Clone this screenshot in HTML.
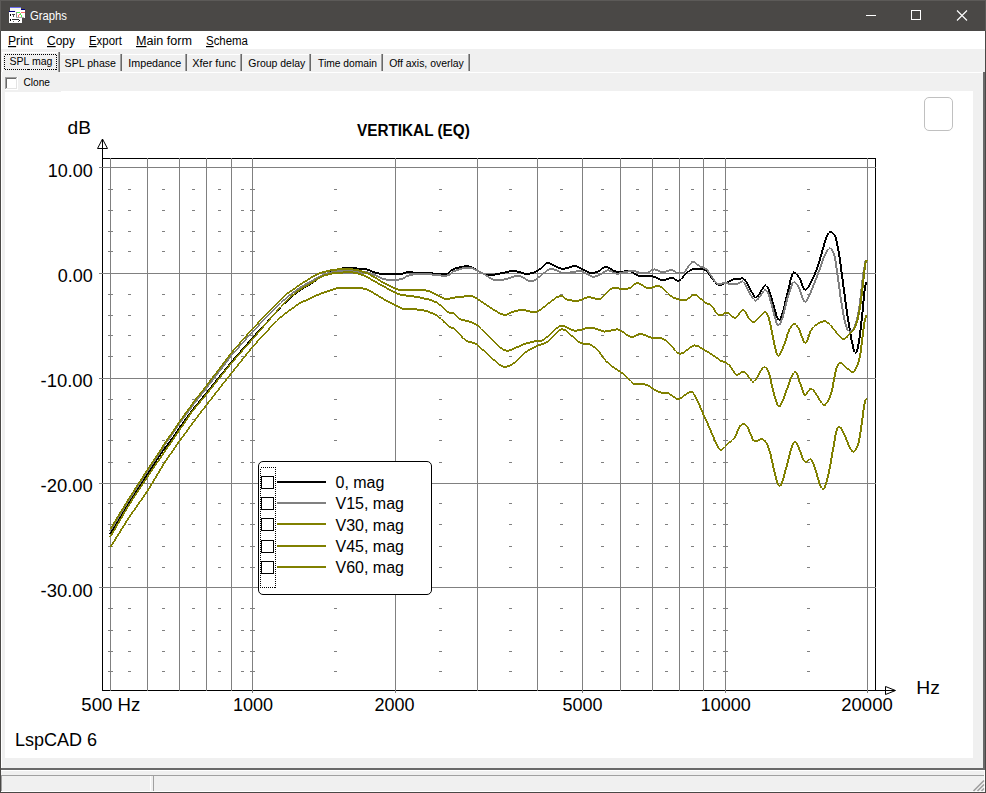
<!DOCTYPE html>
<html lang="en"><head><meta charset="utf-8"><title>Graphs</title>
<style>
html,body{margin:0;padding:0;background:#f0f0f0;}
body{width:986px;height:793px;overflow:hidden;position:relative;font-family:"Liberation Sans",sans-serif;}
svg{position:absolute;left:0;top:0;display:block;}
text{font-family:"Liberation Sans",sans-serif;fill:#000;}
.ui{font-size:12px;}
.tab{font-size:11.5px;}
.ax{font-size:18px;}
.lg{font-size:16px;}
.g{stroke:#808080;stroke-width:1;shape-rendering:crispEdges;}
.k{stroke:#000;stroke-width:1;shape-rendering:crispEdges;fill:none;}
</style></head><body>
<svg width="986" height="793" viewBox="0 0 986 793">
<rect x="0" y="0" width="986" height="793" fill="#f0f0f0"/>
<rect x="0" y="0" width="986" height="31" fill="#4a4846"/>
<rect x="0" y="0" width="986" height="1" fill="#5c5a58"/><rect x="0" y="0" width="1" height="31" fill="#5c5a58"/><rect x="985" y="0" width="1" height="31" fill="#5c5a58"/>
<rect x="1" y="31" width="984" height="18" fill="#ffffff"/>
<rect x="0" y="31" width="1" height="762" fill="#4a4846"/>
<rect x="985" y="31" width="1" height="762" fill="#4a4846"/>
<rect x="0" y="792" width="986" height="1" fill="#4a4846"/>
<g shape-rendering="crispEdges">
<rect x="10" y="7" width="11" height="5" fill="#f4f4ee"/><rect x="10" y="7" width="11" height="1" fill="#6c6cf0"/>
<rect x="16" y="10" width="9" height="8" fill="#ffffff"/><rect x="21" y="9" width="4" height="1" fill="#000080"/>
<rect x="16" y="12" width="4" height="1" fill="#50f050"/><rect x="20" y="13" width="1" height="1" fill="#90c060"/><rect x="20" y="14" width="1" height="1" fill="#50f050"/><rect x="21" y="15" width="1" height="2" fill="#50f050"/>
<rect x="21" y="12" width="4" height="1" fill="#ff7070"/><rect x="19" y="14" width="1" height="1" fill="#ff7070"/><rect x="18" y="15" width="1" height="2" fill="#ff7070"/>
<rect x="9" y="12" width="7" height="11" fill="#ffffff"/><rect x="9" y="18" width="13" height="5" fill="#ffffff"/><rect x="9" y="11" width="6" height="1" fill="#000080"/>
<rect x="16" y="12" width="1" height="6" fill="#8a8a88"/><rect x="16" y="17" width="8" height="1" fill="#b0b0ae"/>
<rect x="10" y="14" width="1" height="2" fill="#000"/><rect x="12" y="14" width="3" height="1" fill="#444"/><rect x="13" y="15" width="1" height="2" fill="#555"/>
<rect x="10" y="19" width="1" height="2" fill="#000"/><rect x="12" y="19" width="7" height="1" fill="#333"/><rect x="19" y="20" width="1" height="1" fill="#000"/><rect x="18" y="21" width="1" height="1" fill="#444"/><rect x="13" y="21" width="1" height="1" fill="#666"/>
</g>
<text class="ui" x="30" y="19.5" style="fill:#fff" textLength="37" lengthAdjust="spacingAndGlyphs">Graphs</text>
<g stroke="#fff" stroke-width="1" fill="none">
<line x1="866" y1="15.5" x2="876" y2="15.5" shape-rendering="crispEdges"/>
<rect x="911.5" y="10.5" width="9" height="9" shape-rendering="crispEdges"/>
<path d="M957,10.5 L967,20.5 M967,10.5 L957,20.5" stroke-width="1.1"/>
</g>
<text class="ui" x="8" y="45" textLength="25" lengthAdjust="spacingAndGlyphs"><tspan text-decoration="underline">P</tspan>rint</text>
<text class="ui" x="47" y="45" textLength="28" lengthAdjust="spacingAndGlyphs"><tspan text-decoration="underline">C</tspan>opy</text>
<text class="ui" x="89" y="45" textLength="33" lengthAdjust="spacingAndGlyphs"><tspan text-decoration="underline">E</tspan>xport</text>
<text class="ui" x="136" y="45" textLength="56" lengthAdjust="spacingAndGlyphs"><tspan text-decoration="underline">M</tspan>ain form</text>
<text class="ui" x="206" y="45" textLength="42" lengthAdjust="spacingAndGlyphs"><tspan text-decoration="underline">S</tspan>chema</text>
<g shape-rendering="crispEdges">
<rect x="1" y="72" width="982" height="1" fill="#ffffff"/>
<rect x="1" y="72" width="1" height="697" fill="#ffffff"/>
<rect x="983" y="72" width="2" height="698" fill="#696969"/>
<rect x="1" y="768" width="984" height="2" fill="#696969"/>
<rect x="2" y="52" width="58" height="21" fill="#f0f0f0"/>
<rect x="2" y="52" width="1" height="20" fill="#ffffff"/><rect x="3" y="52" width="55" height="1" fill="#ffffff"/>
<rect x="58" y="52" width="1" height="20" fill="#a0a0a0"/><rect x="59" y="52" width="1" height="20" fill="#696969"/>
<rect x="4.5" y="54.5" width="52" height="15" fill="none" stroke="#000" stroke-width="1" stroke-dasharray="1,1"/>
<rect x="61" y="54" width="59" height="1" fill="#ffffff"/>
<rect x="120" y="54" width="1" height="17" fill="#a0a0a0"/><rect x="121" y="54" width="1" height="17" fill="#696969"/>
<rect x="123" y="54" width="62" height="1" fill="#ffffff"/>
<rect x="185" y="54" width="1" height="17" fill="#a0a0a0"/><rect x="186" y="54" width="1" height="17" fill="#696969"/>
<rect x="188" y="54" width="52" height="1" fill="#ffffff"/>
<rect x="240" y="54" width="1" height="17" fill="#a0a0a0"/><rect x="241" y="54" width="1" height="17" fill="#696969"/>
<rect x="243" y="54" width="66" height="1" fill="#ffffff"/>
<rect x="309" y="54" width="1" height="17" fill="#a0a0a0"/><rect x="310" y="54" width="1" height="17" fill="#696969"/>
<rect x="312" y="54" width="69" height="1" fill="#ffffff"/>
<rect x="381" y="54" width="1" height="17" fill="#a0a0a0"/><rect x="382" y="54" width="1" height="17" fill="#696969"/>
<rect x="384" y="54" width="84" height="1" fill="#ffffff"/>
<rect x="468" y="54" width="1" height="17" fill="#a0a0a0"/><rect x="469" y="54" width="1" height="17" fill="#696969"/>
</g>
<text class="tab" x="9.5" y="64.8" textLength="43.0" lengthAdjust="spacingAndGlyphs">SPL mag</text>
<text class="tab" x="64.6" y="66.7" textLength="51.4" lengthAdjust="spacingAndGlyphs">SPL phase</text>
<text class="tab" x="128.3" y="66.7" textLength="53.0" lengthAdjust="spacingAndGlyphs">Impedance</text>
<text class="tab" x="192.3" y="66.7" textLength="43.7" lengthAdjust="spacingAndGlyphs">Xfer func</text>
<text class="tab" x="248.3" y="66.7" textLength="57.0" lengthAdjust="spacingAndGlyphs">Group delay</text>
<text class="tab" x="318.0" y="66.7" textLength="59.0" lengthAdjust="spacingAndGlyphs">Time domain</text>
<text class="tab" x="389.2" y="66.7" textLength="74.6" lengthAdjust="spacingAndGlyphs">Off axis, overlay</text>
<g shape-rendering="crispEdges">
<rect x="5" y="77" width="13" height="13" fill="#ffffff"/>
<rect x="5" y="77" width="12" height="1" fill="#a0a0a0"/><rect x="5" y="77" width="1" height="12" fill="#a0a0a0"/>
<rect x="6" y="78" width="10" height="1" fill="#696969"/><rect x="6" y="78" width="1" height="10" fill="#696969"/>
<rect x="6" y="88" width="11" height="1" fill="#e3e3e3"/><rect x="16" y="78" width="1" height="11" fill="#e3e3e3"/>
</g>
<text class="tab" x="23.5" y="86.4" textLength="26.5" lengthAdjust="spacingAndGlyphs">Clone</text>
<rect x="5" y="91" width="968" height="667" fill="#ffffff"/>
<rect x="5" y="91" width="56" height="1" fill="#f0f0f0"/>
<rect x="924.5" y="97.5" width="28" height="33" rx="4.5" fill="none" stroke="#c0c0c0" stroke-width="1"/>
<g class="k">
<line x1="102.5" y1="139" x2="102.5" y2="691"/>
<line x1="102" y1="158.5" x2="876" y2="158.5"/>
<line x1="875.5" y1="158" x2="875.5" y2="691"/>
<line x1="102" y1="690.5" x2="895" y2="690.5"/>
</g>
<path d="M102.5,139 L97.5,148.5 L107.5,148.5 Z" fill="none" stroke="#000" stroke-width="1"/>
<path d="M895.5,690.5 L885.5,686.5 L885.5,694.5 Z" fill="none" stroke="#000" stroke-width="1"/>
<g class="g">
<line x1="110.5" y1="158" x2="110.5" y2="691"/>
<line x1="147.5" y1="158" x2="147.5" y2="691"/>
<line x1="179.5" y1="158" x2="179.5" y2="691"/>
<line x1="206.5" y1="158" x2="206.5" y2="691"/>
<line x1="231.5" y1="158" x2="231.5" y2="691"/>
<line x1="252.5" y1="158" x2="252.5" y2="693"/>
<line x1="395.5" y1="158" x2="395.5" y2="693"/>
<line x1="477.5" y1="158" x2="477.5" y2="691"/>
<line x1="537.5" y1="158" x2="537.5" y2="691"/>
<line x1="582.5" y1="158" x2="582.5" y2="693"/>
<line x1="620.5" y1="158" x2="620.5" y2="691"/>
<line x1="652.5" y1="158" x2="652.5" y2="691"/>
<line x1="679.5" y1="158" x2="679.5" y2="691"/>
<line x1="703.5" y1="158" x2="703.5" y2="691"/>
<line x1="725.5" y1="158" x2="725.5" y2="693"/>
<line x1="867.5" y1="158" x2="867.5" y2="693"/>
<line x1="99" y1="167.5" x2="876" y2="167.5"/>
<line x1="99" y1="273.5" x2="876" y2="273.5"/>
<line x1="99" y1="378.5" x2="876" y2="378.5"/>
<line x1="99" y1="483.5" x2="876" y2="483.5"/>
<line x1="99" y1="587.5" x2="876" y2="587.5"/>
<path d="M128,189.5h3M128,210.5h3M128,231.5h3M128,251.5h3M128,294.5h3M128,315.5h3M128,335.5h3M128,356.5h3M128,399.5h3M128,419.5h3M128,440.5h3M128,462.5h3M128,503.5h3M128,524.5h3M128,546.5h3M128,567.5h3M128,608.5h3M128,630.5h3M128,651.5h3M128,671.5h3M162,189.5h3M162,210.5h3M162,231.5h3M162,251.5h3M162,294.5h3M162,315.5h3M162,335.5h3M162,356.5h3M162,399.5h3M162,419.5h3M162,440.5h3M162,462.5h3M162,503.5h3M162,524.5h3M162,546.5h3M162,567.5h3M162,608.5h3M162,630.5h3M162,651.5h3M162,671.5h3M192,189.5h3M192,210.5h3M192,231.5h3M192,251.5h3M192,294.5h3M192,315.5h3M192,335.5h3M192,356.5h3M192,399.5h3M192,419.5h3M192,440.5h3M192,462.5h3M192,503.5h3M192,524.5h3M192,546.5h3M192,567.5h3M192,608.5h3M192,630.5h3M192,651.5h3M192,671.5h3M218,189.5h3M218,210.5h3M218,231.5h3M218,251.5h3M218,294.5h3M218,315.5h3M218,335.5h3M218,356.5h3M218,399.5h3M218,419.5h3M218,440.5h3M218,462.5h3M218,503.5h3M218,524.5h3M218,546.5h3M218,567.5h3M218,608.5h3M218,630.5h3M218,651.5h3M218,671.5h3M241,189.5h3M241,210.5h3M241,231.5h3M241,251.5h3M241,294.5h3M241,315.5h3M241,335.5h3M241,356.5h3M241,399.5h3M241,419.5h3M241,440.5h3M241,462.5h3M241,503.5h3M241,524.5h3M241,546.5h3M241,567.5h3M241,608.5h3M241,630.5h3M241,651.5h3M241,671.5h3M334,189.5h3M334,210.5h3M334,231.5h3M334,251.5h3M334,294.5h3M334,315.5h3M334,335.5h3M334,356.5h3M334,399.5h3M334,419.5h3M334,440.5h3M334,462.5h3M334,503.5h3M334,524.5h3M334,546.5h3M334,567.5h3M334,608.5h3M334,630.5h3M334,651.5h3M334,671.5h3M439,189.5h3M439,210.5h3M439,231.5h3M439,251.5h3M439,294.5h3M439,315.5h3M439,335.5h3M439,356.5h3M439,399.5h3M439,419.5h3M439,440.5h3M439,462.5h3M439,503.5h3M439,524.5h3M439,546.5h3M439,567.5h3M439,608.5h3M439,630.5h3M439,651.5h3M439,671.5h3M509,189.5h3M509,210.5h3M509,231.5h3M509,251.5h3M509,294.5h3M509,315.5h3M509,335.5h3M509,356.5h3M509,399.5h3M509,419.5h3M509,440.5h3M509,462.5h3M509,503.5h3M509,524.5h3M509,546.5h3M509,567.5h3M509,608.5h3M509,630.5h3M509,651.5h3M509,671.5h3M560,189.5h3M560,210.5h3M560,231.5h3M560,251.5h3M560,294.5h3M560,315.5h3M560,335.5h3M560,356.5h3M560,399.5h3M560,419.5h3M560,440.5h3M560,462.5h3M560,503.5h3M560,524.5h3M560,546.5h3M560,567.5h3M560,608.5h3M560,630.5h3M560,651.5h3M560,671.5h3M601,189.5h3M601,210.5h3M601,231.5h3M601,251.5h3M601,294.5h3M601,315.5h3M601,335.5h3M601,356.5h3M601,399.5h3M601,419.5h3M601,440.5h3M601,462.5h3M601,503.5h3M601,524.5h3M601,546.5h3M601,567.5h3M601,608.5h3M601,630.5h3M601,651.5h3M601,671.5h3M636,189.5h3M636,210.5h3M636,231.5h3M636,251.5h3M636,294.5h3M636,315.5h3M636,335.5h3M636,356.5h3M636,399.5h3M636,419.5h3M636,440.5h3M636,462.5h3M636,503.5h3M636,524.5h3M636,546.5h3M636,567.5h3M636,608.5h3M636,630.5h3M636,651.5h3M636,671.5h3M665,189.5h3M665,210.5h3M665,231.5h3M665,251.5h3M665,294.5h3M665,315.5h3M665,335.5h3M665,356.5h3M665,399.5h3M665,419.5h3M665,440.5h3M665,462.5h3M665,503.5h3M665,524.5h3M665,546.5h3M665,567.5h3M665,608.5h3M665,630.5h3M665,651.5h3M665,671.5h3M691,189.5h3M691,210.5h3M691,231.5h3M691,251.5h3M691,294.5h3M691,315.5h3M691,335.5h3M691,356.5h3M691,399.5h3M691,419.5h3M691,440.5h3M691,462.5h3M691,503.5h3M691,524.5h3M691,546.5h3M691,567.5h3M691,608.5h3M691,630.5h3M691,651.5h3M691,671.5h3M713,189.5h3M713,210.5h3M713,231.5h3M713,251.5h3M713,294.5h3M713,315.5h3M713,335.5h3M713,356.5h3M713,399.5h3M713,419.5h3M713,440.5h3M713,462.5h3M713,503.5h3M713,524.5h3M713,546.5h3M713,567.5h3M713,608.5h3M713,630.5h3M713,651.5h3M713,671.5h3M807,189.5h3M807,210.5h3M807,231.5h3M807,251.5h3M807,294.5h3M807,315.5h3M807,335.5h3M807,356.5h3M807,399.5h3M807,419.5h3M807,440.5h3M807,462.5h3M807,503.5h3M807,524.5h3M807,546.5h3M807,567.5h3M807,608.5h3M807,630.5h3M807,651.5h3M807,671.5h3M108,189.5h5M108,210.5h5M108,231.5h5M108,251.5h5M108,294.5h5M108,315.5h5M108,335.5h5M108,356.5h5M108,399.5h5M108,419.5h5M108,440.5h5M108,462.5h5M108,503.5h5M108,524.5h5M108,546.5h5M108,567.5h5M108,608.5h5M108,630.5h5M108,651.5h5M108,671.5h5M250,189.5h5M250,210.5h5M250,231.5h5M250,251.5h5M250,294.5h5M250,315.5h5M250,335.5h5M250,356.5h5M250,399.5h5M250,419.5h5M250,440.5h5M250,462.5h5M250,503.5h5M250,524.5h5M250,546.5h5M250,567.5h5M250,608.5h5M250,630.5h5M250,651.5h5M250,671.5h5M723,189.5h5M723,210.5h5M723,231.5h5M723,251.5h5M723,294.5h5M723,315.5h5M723,335.5h5M723,356.5h5M723,399.5h5M723,419.5h5M723,440.5h5M723,462.5h5M723,503.5h5M723,524.5h5M723,546.5h5M723,567.5h5M723,608.5h5M723,630.5h5M723,651.5h5M723,671.5h5" fill="none"/>
</g>
<path d="M109.3,533.8L127.7,503.2L129.7,503.2L111.3,533.8ZM127.7,503.2L146.7,474.0L148.7,474.0L129.7,503.2ZM146.7,474.0L161.9,450.7L163.9,450.7L148.7,474.0ZM161.9,450.7L170.1,440.0L172.1,440.0L163.9,450.7ZM170.1,440.0L178.1,428.4L180.1,428.4L172.1,440.0ZM178.1,428.4L191.1,410.3L193.1,410.3L180.1,428.4ZM191.1,410.3L205.2,393.2L207.2,393.2L193.1,410.3ZM205.2,393.2L230.5,361.9L232.5,361.9L207.2,393.2ZM230.5,361.9L251.6,337.7L253.6,337.7L232.5,361.9ZM251.6,337.7L279.9,307.0L281.9,307.0L253.6,337.7ZM280.9,306.0L287.7,299.4L287.7,301.4L280.9,308.0ZM287.7,299.4L293.3,294.4L293.3,296.4L287.7,301.4ZM293.3,294.4L298.3,290.4L298.3,292.4L293.3,296.4ZM298.3,290.4L302.7,287.4L302.7,289.4L298.3,292.4ZM302.7,287.4L306.6,285.3L306.6,287.3L302.7,289.4ZM306.6,285.3L310.4,283.1L310.4,285.1L306.6,287.3ZM310.4,283.1L314.5,280.3L314.5,282.3L310.4,285.1ZM314.5,280.3L318.5,277.4L318.5,279.4L314.5,282.3ZM318.5,277.4L322.6,274.8L322.6,276.8L318.5,279.4ZM322.6,274.8L326.8,272.8L326.8,274.8L322.6,276.8ZM326.8,272.8L331.1,271.1L331.1,273.1L326.8,274.8ZM331.1,271.1L334.8,269.7L334.8,271.7L331.1,273.1ZM334.8,269.7L337.3,268.7L337.3,270.7L334.8,271.7ZM337.3,268.7L339.3,268.0L339.3,270.0L337.3,270.7ZM339.3,268.0L342.1,267.5L342.1,269.5L339.3,270.0ZM342.1,267.5L346.6,267.3L346.6,269.3L342.1,269.5ZM346.6,267.3L351.8,267.3L351.8,269.3L346.6,269.3ZM351.8,267.3L356.7,267.5L356.7,269.5L351.8,269.3ZM356.7,267.5L360.7,267.8L360.7,269.8L356.7,269.5ZM360.7,267.8L364.4,268.1L364.4,270.1L360.7,269.8ZM364.4,268.1L367.6,268.7L367.6,270.7L364.4,270.1ZM367.6,268.7L370.3,269.6L370.3,271.6L367.6,270.7ZM370.3,269.6L372.5,270.6L372.5,272.6L370.3,271.6ZM372.5,270.6L374.9,271.5L374.9,273.5L372.5,272.6ZM374.9,271.5L377.3,272.2L377.3,274.2L374.9,273.5ZM377.3,272.2L379.8,272.7L379.8,274.7L377.3,274.2ZM379.8,272.7L383.4,273.0L383.4,275.0L379.8,274.7ZM383.4,273.0L389.0,273.1L389.0,275.1L383.4,275.0ZM389.0,273.1L395.6,273.0L395.6,275.0L389.0,275.1ZM395.6,273.0L401.1,272.8L401.1,274.8L395.6,275.0ZM401.1,272.8L404.5,272.2L404.5,274.2L401.1,274.8ZM404.5,272.2L406.8,271.4L406.8,273.4L404.5,274.2ZM406.8,271.4L409.2,271.0L409.2,273.0L406.8,273.4ZM409.2,271.0L411.8,271.3L411.8,273.3L409.2,273.0ZM411.8,271.3L414.3,271.8L414.3,273.8L411.8,273.3ZM414.3,271.8L417.4,272.3L417.4,274.3L414.3,273.8ZM417.4,272.3L421.2,272.4L421.2,274.4L417.4,274.3ZM421.2,272.4L425.6,272.3L425.6,274.3L421.2,274.4ZM425.6,272.3L430.3,272.3L430.3,274.3L425.6,274.3ZM430.3,272.3L435.9,272.8L435.9,274.8L430.3,274.3ZM435.9,272.8L441.9,273.4L441.9,275.4L435.9,274.8ZM441.9,273.4L446.6,273.4L446.6,275.4L441.9,275.4ZM446.6,273.4L448.9,272.3L448.9,274.3L446.6,275.4ZM447.9,273.3L449.0,271.5L451.0,271.5L449.9,273.3ZM449.0,271.5L450.4,270.0L452.4,270.0L451.0,271.5ZM451.4,269.0L453.9,267.9L453.9,269.9L451.4,271.0ZM453.9,267.9L456.7,267.0L456.7,269.0L453.9,269.9ZM456.7,267.0L459.6,266.3L459.6,268.3L456.7,269.0ZM459.6,266.3L462.4,265.7L462.4,267.7L459.6,268.3ZM462.4,265.7L465.1,265.3L465.1,267.3L462.4,267.7ZM465.1,265.3L467.7,265.3L467.7,267.3L465.1,267.3ZM467.7,265.3L470.1,265.8L470.1,267.8L467.7,267.3ZM470.1,265.8L472.3,266.6L472.3,268.6L470.1,267.8ZM472.3,266.6L474.2,267.4L474.2,269.4L472.3,268.6ZM474.2,267.4L475.3,268.0L475.3,270.0L474.2,269.4ZM475.3,268.0L476.0,268.6L476.0,270.6L475.3,270.0ZM476.0,268.6L477.5,269.5L477.5,271.5L476.0,270.6ZM477.5,269.5L480.3,271.2L480.3,273.2L477.5,271.5ZM480.3,271.2L484.0,273.2L484.0,275.2L480.3,273.2ZM484.0,273.2L487.9,274.4L487.9,276.4L484.0,275.2ZM487.9,274.4L492.1,274.2L492.1,276.2L487.9,276.4ZM492.1,274.2L496.5,273.3L496.5,275.3L492.1,276.2ZM496.5,273.3L501.0,272.3L501.0,274.3L496.5,275.3ZM501.0,272.3L505.4,271.4L505.4,273.4L501.0,274.3ZM505.4,271.4L509.9,270.4L509.9,272.4L505.4,273.4ZM509.9,270.4L514.1,270.0L514.1,272.0L509.9,272.4ZM514.1,270.0L518.2,270.7L518.2,272.7L514.1,272.0ZM518.2,270.7L522.1,272.0L522.1,274.0L518.2,272.7ZM522.1,272.0L525.6,272.8L525.6,274.8L522.1,274.0ZM525.6,272.8L528.6,272.8L528.6,274.8L525.6,274.8ZM528.6,272.8L531.3,272.3L531.3,274.3L528.6,274.8ZM531.3,272.3L533.8,271.6L533.8,273.6L531.3,274.3ZM533.8,271.6L536.1,270.6L536.1,272.6L533.8,273.6ZM536.1,270.6L538.2,269.4L538.2,271.4L536.1,272.6ZM538.2,269.4L540.3,267.9L540.3,269.9L538.2,271.4ZM540.3,267.9L542.5,265.7L542.5,267.7L540.3,269.9ZM541.5,266.7L543.7,264.3L545.7,264.3L543.5,266.7ZM544.7,263.3L546.9,261.8L546.9,263.8L544.7,265.3ZM546.9,261.8L549.0,261.9L549.0,263.9L546.9,263.8ZM549.0,261.9L551.1,262.9L551.1,264.9L549.0,263.9ZM551.1,262.9L553.4,264.1L553.4,266.1L551.1,264.9ZM553.4,264.1L556.1,265.4L556.1,267.4L553.4,266.1ZM556.1,265.4L558.9,266.9L558.9,268.9L556.1,267.4ZM558.9,266.9L561.6,267.9L561.6,269.9L558.9,268.9ZM561.6,267.9L563.9,267.9L563.9,269.9L561.6,269.9ZM563.9,267.9L566.0,267.3L566.0,269.3L563.9,269.9ZM566.0,267.3L568.2,266.7L568.2,268.7L566.0,269.3ZM568.2,266.7L570.6,266.0L570.6,268.0L568.2,268.7ZM570.6,266.0L573.1,265.3L573.1,267.3L570.6,268.0ZM573.1,265.3L575.6,265.1L575.6,267.1L573.1,267.3ZM575.6,265.1L578.0,265.8L578.0,267.8L575.6,267.1ZM578.0,265.8L580.3,267.1L580.3,269.1L578.0,267.8ZM580.3,267.1L582.6,268.3L582.6,270.3L580.3,269.1ZM582.6,268.3L584.9,269.5L584.9,271.5L582.6,270.3ZM584.9,269.5L587.2,270.7L587.2,272.7L584.9,271.5ZM587.2,270.7L589.5,271.5L589.5,273.5L587.2,272.7ZM589.5,271.5L592.0,271.8L592.0,273.8L589.5,273.5ZM592.0,271.8L594.5,271.7L594.5,273.7L592.0,273.8ZM594.5,271.7L596.9,271.1L596.9,273.1L594.5,273.7ZM596.9,271.1L599.2,269.8L599.2,271.8L596.9,273.1ZM599.2,269.8L601.3,268.0L601.3,270.0L599.2,271.8ZM601.3,268.0L603.4,266.7L603.4,268.7L601.3,270.0ZM603.4,266.7L605.4,266.3L605.4,268.3L603.4,268.7ZM605.4,266.3L607.3,266.3L607.3,268.3L605.4,268.3ZM607.3,266.3L609.2,266.8L609.2,268.8L607.3,268.3ZM609.2,266.8L611.0,267.8L611.0,269.8L609.2,268.8ZM611.0,267.8L612.7,269.2L612.7,271.2L611.0,269.8ZM612.7,269.2L614.8,270.3L614.8,272.3L612.7,271.2ZM614.8,270.3L617.4,270.7L617.4,272.7L614.8,272.3ZM617.4,270.7L620.3,270.7L620.3,272.7L617.4,272.7ZM620.3,270.7L623.0,270.6L623.0,272.6L620.3,272.7ZM623.0,270.6L625.2,270.3L625.2,272.3L623.0,272.6ZM625.2,270.3L627.2,269.8L627.2,271.8L625.2,272.3ZM627.2,269.8L629.5,270.0L629.5,272.0L627.2,271.8ZM629.5,270.0L632.4,271.4L632.4,273.4L629.5,272.0ZM632.4,271.4L635.7,273.4L635.7,275.4L632.4,273.4ZM635.7,273.4L639.3,274.9L639.3,276.9L635.7,275.4ZM639.3,274.9L643.6,275.2L643.6,277.2L639.3,276.9ZM643.6,275.2L648.3,275.0L648.3,277.0L643.6,277.2ZM648.3,275.0L652.5,275.2L652.5,277.2L648.3,277.0ZM652.5,275.2L655.7,276.3L655.7,278.3L652.5,277.2ZM655.7,276.3L658.4,277.7L658.4,279.7L655.7,278.3ZM658.4,277.7L660.7,278.8L660.7,280.8L658.4,279.7ZM660.7,278.8L662.5,279.1L662.5,281.1L660.7,280.8ZM662.5,279.1L664.0,279.1L664.0,281.1L662.5,281.1ZM664.0,279.1L665.6,278.8L665.6,280.8L664.0,281.1ZM665.6,278.8L667.6,278.1L667.6,280.1L665.6,280.8ZM667.6,278.1L669.9,277.2L669.9,279.2L667.6,280.1ZM669.9,277.2L672.1,276.9L672.1,278.9L669.9,279.2ZM672.1,276.9L674.3,277.8L674.3,279.8L672.1,278.9ZM674.3,277.8L676.5,279.3L676.5,281.3L674.3,279.8ZM676.5,279.3L678.7,279.8L678.7,281.8L676.5,281.3ZM678.7,279.8L680.9,278.4L680.9,280.4L678.7,281.8ZM679.9,279.4L682.1,276.9L684.1,276.9L681.9,279.4ZM682.1,276.9L684.2,274.6L686.2,274.6L684.1,276.9ZM684.2,274.6L685.9,272.7L687.9,272.7L686.2,274.6ZM685.9,272.7L687.6,271.0L689.6,271.0L687.9,272.7ZM688.6,270.0L691.0,268.7L691.0,270.7L688.6,272.0ZM691.0,268.7L694.9,268.1L694.9,270.1L691.0,270.7ZM694.9,268.1L699.5,268.0L699.5,270.0L694.9,270.1ZM699.5,268.0L703.3,268.3L703.3,270.3L699.5,270.0ZM703.3,268.3L705.4,269.0L705.4,271.0L703.3,270.3ZM705.4,269.0L706.7,270.2L706.7,272.2L705.4,271.0ZM707.7,271.2L709.2,273.0L707.2,273.0L705.7,271.2ZM709.2,273.0L711.3,275.8L709.3,275.8L707.2,273.0ZM711.3,275.8L713.7,279.3L711.7,279.3L709.3,275.8ZM713.7,279.3L715.8,282.0L713.8,282.0L711.7,279.3ZM714.8,281.0L716.5,282.6L716.5,284.6L714.8,283.0ZM716.5,282.6L718.0,283.5L718.0,285.5L716.5,284.6ZM718.0,283.5L719.7,283.8L719.7,285.8L718.0,285.5ZM719.7,283.8L721.7,283.5L721.7,285.5L719.7,285.8ZM721.7,283.5L724.0,282.7L724.0,284.7L721.7,285.5ZM724.0,282.7L726.2,281.8L726.2,283.8L724.0,284.7ZM726.2,281.8L728.4,280.7L728.4,282.7L726.2,283.8ZM728.4,280.7L730.6,279.5L730.6,281.5L728.4,282.7ZM730.6,279.5L732.8,278.5L732.8,280.5L730.6,281.5ZM732.8,278.5L735.3,278.0L735.3,280.0L732.8,280.5ZM735.3,278.0L737.8,277.7L737.8,279.7L735.3,280.0ZM737.8,277.7L740.0,277.6L740.0,279.6L737.8,279.7ZM740.0,277.6L741.6,277.4L741.6,279.4L740.0,279.6ZM741.6,277.4L743.0,277.3L743.0,279.3L741.6,279.4ZM743.0,277.3L744.4,278.1L744.4,280.1L743.0,279.3ZM745.4,279.1L747.1,281.4L745.1,281.4L743.4,279.1ZM747.1,281.4L748.9,284.7L746.9,284.7L745.1,281.4ZM748.9,284.7L750.7,288.0L748.7,288.0L746.9,284.7ZM750.7,288.0L752.6,291.7L750.6,291.7L748.7,288.0ZM752.6,291.7L754.6,295.5L752.6,295.5L750.6,291.7ZM754.6,295.5L756.5,297.7L754.5,297.7L752.6,295.5ZM755.5,296.7L757.2,296.1L757.2,298.1L755.5,298.7ZM756.2,297.1L757.7,294.9L759.7,294.9L758.2,297.1ZM757.7,294.9L759.3,292.4L761.3,292.4L759.7,294.9ZM759.3,292.4L760.9,289.6L762.9,289.6L761.3,292.4ZM760.9,289.6L762.6,286.6L764.6,286.6L762.9,289.6ZM762.6,286.6L764.1,285.0L766.1,285.0L764.6,286.6ZM765.1,284.0L766.4,284.5L766.4,286.5L765.1,286.0ZM767.4,285.5L768.7,287.4L766.7,287.4L765.4,285.5ZM768.7,287.4L770.1,290.6L768.1,290.6L766.7,287.4ZM770.1,290.6L771.8,295.8L769.8,295.8L768.1,290.6ZM771.8,295.8L773.7,302.4L771.7,302.4L769.8,295.8ZM773.7,302.4L775.4,308.3L773.4,308.3L771.7,302.4ZM775.4,308.3L776.9,313.4L774.9,313.4L773.4,308.3ZM776.9,313.4L778.2,317.9L776.2,317.9L774.9,313.4ZM778.2,317.9L779.5,320.3L777.5,320.3L776.2,317.9ZM778.5,319.3L779.8,319.0L779.8,321.0L778.5,321.3ZM778.8,320.0L780.0,317.6L782.0,317.6L780.8,320.0ZM780.0,317.6L781.4,313.6L783.4,313.6L782.0,317.6ZM781.4,313.6L783.1,307.5L785.1,307.5L783.4,313.6ZM783.1,307.5L784.9,299.7L786.9,299.7L785.1,307.5ZM784.9,299.7L786.7,292.4L788.7,292.4L786.9,299.7ZM786.7,292.4L788.3,285.7L790.3,285.7L788.7,292.4ZM788.3,285.7L789.8,279.3L791.8,279.3L790.3,285.7ZM789.8,279.3L791.1,274.7L793.1,274.7L791.8,279.3ZM791.1,274.7L792.0,272.6L794.0,272.6L793.1,274.7ZM793.0,271.6L793.8,271.2L793.8,273.2L793.0,273.6ZM793.8,271.2L794.7,271.6L794.7,273.6L793.8,273.2ZM794.7,271.6L796.0,272.5L796.0,274.5L794.7,273.6ZM797.0,273.5L798.6,275.1L796.6,275.1L795.0,273.5ZM798.6,275.1L800.1,277.4L798.1,277.4L796.6,275.1ZM800.1,277.4L801.7,280.8L799.7,280.8L798.1,277.4ZM801.7,280.8L803.2,284.9L801.2,284.9L799.7,280.8ZM803.2,284.9L804.6,288.0L802.6,288.0L801.2,284.9ZM804.6,288.0L805.5,289.5L803.5,289.5L802.6,288.0ZM804.5,288.5L805.3,289.1L805.3,291.1L804.5,290.5ZM805.3,289.1L806.2,288.7L806.2,290.7L805.3,291.1ZM805.2,289.7L806.4,288.3L808.4,288.3L807.2,289.7ZM806.4,288.3L807.9,286.0L809.9,286.0L808.4,288.3ZM807.9,286.0L809.6,282.7L811.6,282.7L809.9,286.0ZM809.6,282.7L811.8,278.2L813.8,278.2L811.6,282.7ZM811.8,278.2L814.4,272.6L816.4,272.6L813.8,278.2ZM814.4,272.6L816.7,266.8L818.7,266.8L816.4,272.6ZM816.7,266.8L818.6,260.6L820.6,260.6L818.7,266.8ZM818.6,260.6L820.4,254.1L822.4,254.1L820.6,260.6ZM820.4,254.1L822.0,248.2L824.0,248.2L822.4,254.1ZM822.0,248.2L823.6,243.0L825.6,243.0L824.0,248.2ZM823.6,243.0L825.0,238.4L827.0,238.4L825.6,243.0ZM825.0,238.4L826.4,235.0L828.4,235.0L827.0,238.4ZM826.4,235.0L827.6,233.0L829.6,233.0L828.4,235.0ZM828.6,232.0L829.7,231.0L829.7,233.0L828.6,234.0ZM829.7,231.0L830.9,231.0L830.9,233.0L829.7,233.0ZM830.9,231.0L832.3,231.6L832.3,233.6L830.9,233.0ZM832.3,231.6L833.9,233.0L833.9,235.0L832.3,233.6ZM834.9,234.0L836.3,236.8L834.3,236.8L832.9,234.0ZM836.3,236.8L837.6,241.2L835.6,241.2L834.3,236.8ZM837.6,241.2L838.7,246.9L836.7,246.9L835.6,241.2ZM838.7,246.9L839.9,253.5L837.9,253.5L836.7,246.9ZM839.9,253.5L841.1,261.1L839.1,261.1L837.9,253.5ZM841.1,261.1L842.2,269.6L840.2,269.6L839.1,261.1ZM842.2,269.6L843.4,278.3L841.4,278.3L840.2,269.6ZM843.4,278.3L844.5,286.9L842.5,286.9L841.4,278.3ZM844.5,286.9L845.7,295.7L843.7,295.7L842.5,286.9ZM845.7,295.7L846.9,304.7L844.9,304.7L843.7,295.7ZM846.9,304.7L848.3,314.3L846.3,314.3L844.9,304.7ZM848.3,314.3L849.8,324.2L847.8,324.2L846.3,314.3ZM849.8,324.2L851.3,333.0L849.3,333.0L847.8,324.2ZM851.3,333.0L852.8,341.1L850.8,341.1L849.3,333.0ZM852.8,341.1L854.4,348.2L852.4,348.2L850.8,341.1ZM854.4,348.2L855.8,352.4L853.8,352.4L852.4,348.2ZM854.8,351.4L856.0,351.7L856.0,353.7L854.8,353.4ZM855.0,352.7L856.2,350.2L858.2,350.2L857.0,352.7ZM856.2,350.2L857.3,345.4L859.3,345.4L858.2,350.2ZM857.3,345.4L858.5,338.1L860.5,338.1L859.3,345.4ZM858.5,338.1L859.7,328.6L861.7,328.6L860.5,338.1ZM859.7,328.6L860.8,318.9L862.8,318.9L861.7,328.6ZM860.8,318.9L861.8,308.9L863.8,308.9L862.8,318.9ZM861.8,308.9L862.7,298.7L864.7,298.7L863.8,308.9ZM862.7,298.7L863.5,290.6L865.5,290.6L864.7,298.7ZM863.5,290.6L864.2,285.9L866.2,285.9L865.5,290.6ZM864.2,285.9L864.8,283.4L866.8,283.4L866.2,285.9ZM864.8,283.4L865.2,281.8L867.2,281.8L866.8,283.4Z" fill="#000000" stroke="none" shape-rendering="crispEdges"/>
<path d="M109.3,530.8L127.7,500.5L129.7,500.5L111.3,530.8ZM127.7,500.5L146.7,471.0L148.7,471.0L129.7,500.5ZM146.7,471.0L165.6,442.3L167.6,442.3L148.7,471.0ZM165.6,442.3L178.1,424.0L180.1,424.0L167.6,442.3ZM178.1,424.0L194.3,402.0L196.3,402.0L180.1,424.0ZM194.3,402.0L205.2,388.5L207.2,388.5L196.3,402.0ZM205.2,388.5L230.5,355.5L232.5,355.5L207.2,388.5ZM230.5,355.5L251.6,331.5L253.6,331.5L232.5,355.5ZM251.6,331.5L279.9,302.8L281.9,302.8L253.6,331.5ZM280.9,301.8L287.7,295.8L287.7,297.8L280.9,303.8ZM287.7,295.8L293.3,291.5L293.3,293.5L287.7,297.8ZM293.3,291.5L298.3,287.9L298.3,289.9L293.3,293.5ZM298.3,287.9L302.8,285.0L302.8,287.0L298.3,289.9ZM302.8,285.0L306.6,282.9L306.6,284.9L302.8,287.0ZM306.6,282.9L310.4,280.9L310.4,282.9L306.6,284.9ZM310.4,280.9L314.1,278.7L314.1,280.7L310.4,282.9ZM314.1,278.7L317.6,276.7L317.6,278.7L314.1,280.7ZM317.6,276.7L321.4,274.8L321.4,276.8L317.6,278.7ZM321.4,274.8L325.5,273.1L325.5,275.1L321.4,276.8ZM325.5,273.1L329.9,271.7L329.9,273.7L325.5,275.1ZM329.9,271.7L334.8,270.7L334.8,272.7L329.9,273.7ZM334.8,270.7L340.6,270.2L340.6,272.2L334.8,272.7ZM340.6,270.2L347.0,270.2L347.0,272.2L340.6,272.2ZM347.0,270.2L353.0,270.3L353.0,272.3L347.0,272.2ZM353.0,270.3L358.3,270.5L358.3,272.5L353.0,272.3ZM358.3,270.5L363.2,270.9L363.2,272.9L358.3,272.5ZM363.2,270.9L367.6,271.5L367.6,273.5L363.2,272.9ZM367.6,271.5L371.2,272.6L371.2,274.6L367.6,273.5ZM371.2,272.6L374.4,273.9L374.4,275.9L371.2,274.6ZM374.4,273.9L377.4,275.2L377.4,277.2L374.4,275.9ZM377.4,275.2L380.3,276.5L380.3,278.5L377.4,277.2ZM380.3,276.5L383.1,277.8L383.1,279.8L380.3,278.5ZM383.1,277.8L386.5,278.6L386.5,280.6L383.1,279.8ZM386.5,278.6L391.3,278.9L391.3,280.9L386.5,280.6ZM391.3,278.9L396.7,278.7L396.7,280.7L391.3,280.9ZM396.7,278.7L401.1,278.3L401.1,280.3L396.7,280.7ZM401.1,278.3L403.3,277.5L403.3,279.5L401.1,280.3ZM403.3,277.5L404.5,276.5L404.5,278.5L403.3,279.5ZM404.5,276.5L406.0,275.5L406.0,277.5L404.5,278.5ZM406.0,275.5L408.2,274.7L408.2,276.7L406.0,277.5ZM408.2,274.7L410.7,273.9L410.7,275.9L408.2,276.7ZM410.7,273.9L414.1,273.4L414.1,275.4L410.7,275.9ZM414.1,273.4L418.9,273.2L418.9,275.2L414.1,275.4ZM418.9,273.2L424.6,273.2L424.6,275.2L418.9,275.2ZM424.6,273.2L430.3,273.4L430.3,275.4L424.6,275.2ZM430.3,273.4L436.1,273.9L436.1,275.9L430.3,275.4ZM436.1,273.9L441.9,274.6L441.9,276.6L436.1,275.9ZM441.9,274.6L446.6,274.7L446.6,276.7L441.9,276.6ZM446.6,274.7L449.4,273.7L449.4,275.7L446.6,276.7ZM449.4,273.7L451.1,272.1L451.1,274.1L449.4,275.7ZM451.1,272.1L453.1,270.6L453.1,272.6L451.1,274.1ZM453.1,270.6L456.2,269.4L456.2,271.4L453.1,272.6ZM456.2,269.4L459.6,268.2L459.6,270.2L456.2,271.4ZM459.6,268.2L462.8,267.4L462.8,269.4L459.6,270.2ZM462.8,267.4L465.7,266.9L465.7,268.9L462.8,269.4ZM465.7,266.9L468.4,266.7L468.4,268.7L465.7,268.9ZM468.4,266.7L470.9,266.9L470.9,268.9L468.4,268.7ZM470.9,266.9L473.1,267.6L473.1,269.6L470.9,268.9ZM473.1,267.6L475.2,268.7L475.2,270.7L473.1,269.6ZM475.2,268.7L477.5,270.0L477.5,272.0L475.2,270.7ZM477.5,270.0L480.3,271.4L480.3,273.4L477.5,272.0ZM480.3,271.4L483.4,272.9L483.4,274.9L480.3,273.4ZM483.4,272.9L486.2,274.4L486.2,276.4L483.4,274.9ZM486.2,274.4L488.4,275.9L488.4,277.9L486.2,276.4ZM488.4,275.9L490.3,277.4L490.3,279.4L488.4,277.9ZM490.3,277.4L492.8,278.5L492.8,280.5L490.3,279.4ZM492.8,278.5L496.3,278.9L496.3,280.9L492.8,280.5ZM496.3,278.9L500.3,278.9L500.3,280.9L496.3,280.9ZM500.3,278.9L504.3,278.5L504.3,280.5L500.3,280.9ZM504.3,278.5L508.3,277.4L508.3,279.4L504.3,280.5ZM508.3,277.4L512.3,275.9L512.3,277.9L508.3,279.4ZM512.3,275.9L515.7,274.9L515.7,276.9L512.3,277.9ZM515.7,274.9L518.3,274.8L518.3,276.8L515.7,276.9ZM518.3,274.8L520.3,275.3L520.3,277.3L518.3,276.8ZM520.3,275.3L522.3,276.0L522.3,278.0L520.3,277.3ZM522.3,276.0L524.5,277.2L524.5,279.2L522.3,278.0ZM524.5,277.2L526.8,278.8L526.8,280.8L524.5,279.2ZM526.8,278.8L528.9,279.8L528.9,281.8L526.8,280.8ZM528.9,279.8L530.8,280.1L530.8,282.1L528.9,281.8ZM530.8,280.1L532.6,280.0L532.6,282.0L530.8,282.1ZM532.6,280.0L534.6,279.3L534.6,281.3L532.6,282.0ZM534.6,279.3L536.9,277.8L536.9,279.8L534.6,281.3ZM536.9,277.8L539.5,275.7L539.5,277.7L536.9,279.8ZM539.5,275.7L542.0,273.6L542.0,275.6L539.5,277.7ZM542.0,273.6L544.5,271.6L544.5,273.6L542.0,275.6ZM544.5,271.6L547.0,269.6L547.0,271.6L544.5,273.6ZM547.0,269.6L549.3,268.3L549.3,270.3L547.0,271.6ZM549.3,268.3L551.3,267.9L551.3,269.9L549.3,270.3ZM551.3,267.9L553.2,268.2L553.2,270.2L551.3,269.9ZM553.2,268.2L555.1,268.7L555.1,270.7L553.2,270.2ZM555.1,268.7L557.0,269.6L557.0,271.6L555.1,270.7ZM557.0,269.6L559.0,270.8L559.0,272.8L557.0,271.6ZM559.0,270.8L561.6,271.6L561.6,273.6L559.0,272.8ZM561.6,271.6L565.3,271.7L565.3,273.7L561.6,273.6ZM565.3,271.7L569.5,271.5L569.5,273.5L565.3,273.7ZM569.5,271.5L573.1,271.1L573.1,273.1L569.5,273.5ZM573.1,271.1L575.5,270.5L575.5,272.5L573.1,273.1ZM575.5,270.5L577.2,269.8L577.2,271.8L575.5,272.5ZM577.2,269.8L578.9,269.5L578.9,271.5L577.2,271.8ZM578.9,269.5L580.7,270.0L580.7,272.0L578.9,271.5ZM580.7,270.0L582.5,270.9L582.5,272.9L580.7,272.0ZM582.5,270.9L584.6,272.0L584.6,274.0L582.5,272.9ZM584.6,272.0L587.2,273.3L587.2,275.3L584.6,274.0ZM587.2,273.3L590.1,274.8L590.1,276.8L587.2,275.3ZM590.1,274.8L592.8,275.6L592.8,277.6L590.1,276.8ZM592.8,275.6L595.0,275.5L595.0,277.5L592.8,277.6ZM595.0,275.5L597.0,274.9L597.0,276.9L595.0,277.5ZM597.0,274.9L599.3,273.9L599.3,275.9L597.0,276.9ZM599.3,273.9L602.1,272.2L602.1,274.2L599.3,275.9ZM602.1,272.2L605.2,270.3L605.2,272.3L602.1,274.2ZM605.2,270.3L608.2,269.2L608.2,271.2L605.2,272.3ZM608.2,269.2L611.0,270.0L611.0,272.0L608.2,271.2ZM611.0,270.0L613.7,271.7L613.7,273.7L611.0,272.0ZM613.7,271.7L616.4,272.8L616.4,274.8L613.7,273.7ZM616.4,272.8L619.1,272.6L619.1,274.6L616.4,274.8ZM619.1,272.6L621.9,271.8L621.9,273.8L619.1,274.6ZM621.9,271.8L624.6,271.1L624.6,273.1L621.9,273.8ZM624.6,271.1L627.3,270.6L627.3,272.6L624.6,273.1ZM627.3,270.6L630.1,270.1L630.1,272.1L627.3,272.6ZM630.1,270.1L632.8,270.0L632.8,272.0L630.1,272.1ZM632.8,270.0L635.6,270.5L635.6,272.5L632.8,272.0ZM635.6,270.5L638.4,271.4L638.4,273.4L635.6,272.5ZM638.4,271.4L641.0,272.0L641.0,274.0L638.4,273.4ZM641.0,272.0L643.3,272.2L643.3,274.2L641.0,274.0ZM643.3,272.2L645.4,272.0L645.4,274.0L643.3,274.2ZM645.4,272.0L647.5,271.6L647.5,273.6L645.4,274.0ZM647.5,271.6L649.6,270.5L649.6,272.5L647.5,273.6ZM649.6,270.5L651.8,269.1L651.8,271.1L649.6,272.5ZM651.8,269.1L654.1,268.3L654.1,270.3L651.8,271.1ZM654.1,268.3L656.7,269.0L656.7,271.0L654.1,270.3ZM656.7,269.0L659.4,270.3L659.4,272.3L656.7,271.0ZM659.4,270.3L662.3,271.1L662.3,273.1L659.4,272.3ZM662.3,271.1L665.6,270.6L665.6,272.6L662.3,273.1ZM665.6,270.6L669.1,269.5L669.1,271.5L665.6,272.6ZM669.1,269.5L672.1,269.0L672.1,271.0L669.1,271.5ZM672.1,269.0L674.0,269.7L674.0,271.7L672.1,271.0ZM674.0,269.7L675.4,271.1L675.4,273.1L674.0,271.7ZM675.4,271.1L677.0,272.0L677.0,274.0L675.4,273.1ZM677.0,272.0L679.1,272.4L679.1,274.4L677.0,274.0ZM679.1,272.4L681.3,272.5L681.3,274.5L679.1,274.4ZM681.3,272.5L683.6,271.6L683.6,273.6L681.3,274.5ZM682.6,272.6L684.9,270.1L686.9,270.1L684.6,272.6ZM684.9,270.1L687.3,266.6L689.3,266.6L686.9,270.1ZM687.3,266.6L689.2,263.9L691.2,263.9L689.3,266.6ZM689.2,263.9L690.4,262.5L692.4,262.5L691.2,263.9ZM691.4,261.5L692.2,260.8L692.2,262.8L691.4,263.5ZM692.2,260.8L693.4,260.8L693.4,262.8L692.2,262.8ZM693.4,260.8L695.3,261.9L695.3,263.9L693.4,262.8ZM695.3,261.9L697.7,263.7L697.7,265.7L695.3,263.9ZM697.7,263.7L700.0,265.4L700.0,267.4L697.7,265.7ZM700.0,265.4L702.2,266.3L702.2,268.3L700.0,267.4ZM702.2,266.3L704.4,266.9L704.4,268.9L702.2,268.3ZM704.4,266.9L706.6,268.3L706.6,270.3L704.4,268.9ZM707.6,269.3L709.8,272.1L707.8,272.1L705.6,269.3ZM709.8,272.1L712.1,275.6L710.1,275.6L707.8,272.1ZM712.1,275.6L714.1,278.7L712.1,278.7L710.1,275.6ZM714.1,278.7L715.8,281.1L713.8,281.1L712.1,278.7ZM715.8,281.1L717.3,283.2L715.3,283.2L713.8,281.1ZM716.3,282.2L718.0,283.4L718.0,285.4L716.3,284.2ZM718.0,283.4L720.1,283.3L720.1,285.3L718.0,285.4ZM720.1,283.3L722.3,282.4L722.3,284.4L720.1,285.3ZM722.3,282.4L724.6,281.8L724.6,283.8L722.3,284.4ZM724.6,281.8L726.8,282.1L726.8,284.1L724.6,283.8ZM726.8,282.1L728.9,282.7L728.9,284.7L726.8,284.1ZM728.9,282.7L731.1,283.1L731.1,285.1L728.9,284.7ZM731.1,283.1L733.4,283.1L733.4,285.1L731.1,285.1ZM733.4,283.1L735.7,283.0L735.7,285.0L733.4,285.1ZM735.7,283.0L737.7,282.6L737.7,284.6L735.7,285.0ZM737.7,282.6L739.3,281.9L739.3,283.9L737.7,284.6ZM739.3,281.9L740.6,281.0L740.6,283.0L739.3,283.9ZM740.6,281.0L741.8,280.5L741.8,282.5L740.6,283.0ZM741.8,280.5L742.7,280.3L742.7,282.3L741.8,282.5ZM742.7,280.3L743.4,280.5L743.4,282.5L742.7,282.3ZM744.4,281.5L745.4,282.7L743.4,282.7L742.4,281.5ZM745.4,282.7L746.9,285.6L744.9,285.6L743.4,282.7ZM746.9,285.6L748.8,289.6L746.8,289.6L744.9,285.6ZM748.8,289.6L750.7,293.3L748.7,293.3L746.8,289.6ZM750.7,293.3L752.6,296.5L750.6,296.5L748.7,293.3ZM752.6,296.5L754.6,299.4L752.6,299.4L750.6,296.5ZM753.6,298.4L755.5,299.9L755.5,301.9L753.6,300.4ZM755.5,299.9L757.2,299.2L757.2,301.2L755.5,301.9ZM756.2,300.2L757.7,298.1L759.7,298.1L758.2,300.2ZM757.7,298.1L759.3,295.9L761.3,295.9L759.7,298.1ZM759.3,295.9L760.9,293.5L762.9,293.5L761.3,295.9ZM760.9,293.5L762.6,290.9L764.6,290.9L762.9,293.5ZM763.6,289.9L765.1,288.7L765.1,290.7L763.6,291.9ZM765.1,288.7L766.4,289.4L766.4,291.4L765.1,290.7ZM767.4,290.4L768.7,292.4L766.7,292.4L765.4,290.4ZM768.7,292.4L770.1,295.9L768.1,295.9L766.7,292.4ZM770.1,295.9L771.8,301.7L769.8,301.7L768.1,295.9ZM771.8,301.7L773.7,309.0L771.7,309.0L769.8,301.7ZM773.7,309.0L775.4,315.3L773.4,315.3L771.7,309.0ZM775.4,315.3L776.7,320.1L774.7,320.1L773.4,315.3ZM776.7,320.1L777.8,323.8L775.8,323.8L774.7,320.1ZM777.8,323.8L779.0,325.6L777.0,325.6L775.8,323.8ZM778.0,324.6L779.4,323.9L779.4,325.9L778.0,326.6ZM778.4,324.9L779.8,322.1L781.8,322.1L780.4,324.9ZM779.8,322.1L781.4,318.0L783.4,318.0L781.8,322.1ZM781.4,318.0L783.1,311.9L785.1,311.9L783.4,318.0ZM783.1,311.9L785.0,304.4L787.0,304.4L785.1,311.9ZM785.0,304.4L786.7,297.7L788.7,297.7L787.0,304.4ZM786.7,297.7L788.3,292.4L790.3,292.4L788.7,297.7ZM788.3,292.4L789.8,287.8L791.8,287.8L790.3,292.4ZM789.8,287.8L791.1,284.4L793.1,284.4L791.8,287.8ZM791.1,284.4L792.0,282.4L794.0,282.4L793.1,284.4ZM792.0,282.4L792.8,281.6L794.8,281.6L794.0,282.4ZM793.8,280.6L794.7,280.8L794.7,282.8L793.8,282.6ZM794.7,280.8L796.0,282.0L796.0,284.0L794.7,282.8ZM797.0,283.0L798.6,285.2L796.6,285.2L795.0,283.0ZM798.6,285.2L800.1,288.0L798.1,288.0L796.6,285.2ZM800.1,288.0L801.7,292.1L799.7,292.1L798.1,288.0ZM801.7,292.1L803.2,296.8L801.2,296.8L799.7,292.1ZM803.2,296.8L804.6,300.3L802.6,300.3L801.2,296.8ZM804.6,300.3L805.5,301.9L803.5,301.9L802.6,300.3ZM804.5,300.9L805.3,301.4L805.3,303.4L804.5,302.9ZM805.3,301.4L806.2,300.6L806.2,302.6L805.3,303.4ZM805.2,301.6L806.4,299.6L808.4,299.6L807.2,301.6ZM806.4,299.6L807.9,296.5L809.9,296.5L808.4,299.6ZM807.9,296.5L809.6,292.4L811.6,292.4L809.9,296.5ZM809.6,292.4L811.8,287.0L813.8,287.0L811.6,292.4ZM811.8,287.0L814.4,280.7L816.4,280.7L813.8,287.0ZM814.4,280.7L816.7,274.7L818.7,274.7L816.4,280.7ZM816.7,274.7L818.6,269.3L820.6,269.3L818.7,274.7ZM818.6,269.3L820.4,264.2L822.4,264.2L820.6,269.3ZM820.4,264.2L822.0,259.7L824.0,259.7L822.4,264.2ZM822.0,259.7L823.6,255.9L825.6,255.9L824.0,259.7ZM823.6,255.9L825.1,252.8L827.1,252.8L825.6,255.9ZM825.1,252.8L826.4,250.4L828.4,250.4L827.1,252.8ZM826.4,250.4L827.5,248.8L829.5,248.8L828.4,250.4ZM828.5,247.8L829.4,246.9L829.4,248.9L828.5,249.8ZM829.4,246.9L830.4,247.2L830.4,249.2L829.4,248.9ZM831.4,248.2L832.7,249.6L830.7,249.6L829.4,248.2ZM832.7,249.6L834.1,252.1L832.1,252.1L830.7,249.6ZM834.1,252.1L835.5,256.2L833.5,256.2L832.1,252.1ZM835.5,256.2L836.7,262.4L834.7,262.4L833.5,256.2ZM836.7,262.4L837.9,270.2L835.9,270.2L834.7,262.4ZM837.9,270.2L839.0,278.3L837.0,278.3L835.9,270.2ZM839.0,278.3L840.2,286.5L838.2,286.5L837.0,278.3ZM840.2,286.5L841.3,295.1L839.3,295.1L838.2,286.5ZM841.3,295.1L842.5,303.0L840.5,303.0L839.3,295.1ZM842.5,303.0L843.7,310.3L841.7,310.3L840.5,303.0ZM843.7,310.3L844.8,316.9L842.8,316.9L841.7,310.3ZM844.8,316.9L846.0,322.4L844.0,322.4L842.8,316.9ZM846.0,322.4L847.2,326.5L845.2,326.5L844.0,322.4ZM847.2,326.5L848.4,329.4L846.4,329.4L845.2,326.5ZM848.4,329.4L849.6,331.2L847.6,331.2L846.4,329.4ZM848.6,330.2L849.8,330.8L849.8,332.8L848.6,332.2ZM849.8,330.8L850.9,330.3L850.9,332.3L849.8,332.8ZM850.9,330.3L852.1,329.3L852.1,331.3L850.9,332.3ZM851.1,330.3L852.3,329.0L854.3,329.0L853.1,330.3ZM852.3,329.0L853.4,327.2L855.4,327.2L854.3,329.0ZM853.4,327.2L854.6,324.2L856.6,324.2L855.4,327.2ZM854.6,324.2L855.8,320.1L857.8,320.1L856.6,324.2ZM855.8,320.1L857.0,315.0L859.0,315.0L857.8,320.1ZM857.0,315.0L858.2,308.3L860.2,308.3L859.0,315.0ZM858.2,308.3L859.4,298.9L861.4,298.9L860.2,308.3ZM859.4,298.9L860.6,287.8L862.6,287.8L861.4,298.9ZM860.6,287.8L861.7,278.3L863.7,278.3L862.6,287.8ZM861.7,278.3L862.7,271.1L864.7,271.1L863.7,278.3ZM862.7,271.1L863.7,265.5L865.7,265.5L864.7,271.1ZM863.7,265.5L864.4,261.5L866.4,261.5L865.7,265.5ZM864.4,261.5L864.9,259.9L866.9,259.9L866.4,261.5ZM865.9,258.9L866.2,259.0L866.2,261.0L865.9,260.9ZM867.2,260.0L867.4,260.3L865.4,260.3L865.2,260.0Z" fill="#808080" stroke="none" shape-rendering="crispEdges"/>
<path d="M109.3,529.3L127.7,499.0L129.7,499.0L111.3,529.3ZM127.7,499.0L146.7,469.5L148.7,469.5L129.7,499.0ZM146.7,469.5L165.6,440.8L167.6,440.8L148.7,469.5ZM165.6,440.8L178.1,422.3L180.1,422.3L167.6,440.8ZM178.1,422.3L194.3,400.0L196.3,400.0L180.1,422.3ZM194.3,400.0L205.2,386.1L207.2,386.1L196.3,400.0ZM205.2,386.1L230.5,352.8L232.5,352.8L207.2,386.1ZM230.5,352.8L251.6,328.6L253.6,328.6L232.5,352.8ZM251.6,328.6L279.9,299.3L281.9,299.3L253.6,328.6ZM280.9,298.3L285.9,293.7L285.9,295.7L280.9,300.3ZM285.9,293.7L289.0,291.4L289.0,293.4L285.9,295.7ZM289.0,291.4L292.2,289.2L292.2,291.2L289.0,293.4ZM292.2,289.2L296.1,286.4L296.1,288.4L292.2,291.2ZM296.1,286.4L300.1,283.6L300.1,285.6L296.1,288.4ZM300.1,283.6L304.3,280.9L304.3,282.9L300.1,285.6ZM304.3,280.9L308.9,278.0L308.9,280.0L304.3,282.9ZM308.9,278.0L313.8,275.1L313.8,277.1L308.9,280.0ZM313.8,275.1L318.9,272.7L318.9,274.7L313.8,277.1ZM318.9,272.7L324.0,270.9L324.0,272.9L318.9,274.7ZM324.0,270.9L329.3,269.6L329.3,271.6L324.0,272.9ZM329.3,269.6L334.8,268.7L334.8,270.7L329.3,271.6ZM334.8,268.7L340.9,268.2L340.9,270.2L334.8,270.7ZM340.9,268.2L347.3,268.2L347.3,270.2L340.9,270.2ZM347.3,268.2L353.0,268.5L353.0,270.5L347.3,270.2ZM353.0,268.5L357.6,269.2L357.6,271.2L353.0,270.5ZM357.6,269.2L361.5,270.2L361.5,272.2L357.6,271.2ZM361.5,270.2L365.2,271.5L365.2,273.5L361.5,272.2ZM365.2,271.5L368.7,273.0L368.7,275.0L365.2,273.5ZM368.7,273.0L371.8,274.7L371.8,276.7L368.7,275.0ZM371.8,274.7L374.9,276.4L374.9,278.4L371.8,276.7ZM374.9,276.4L377.6,278.1L377.6,280.1L374.9,278.4ZM377.6,278.1L380.2,280.0L380.2,282.0L377.6,280.1ZM380.2,280.0L383.4,281.9L383.4,283.9L380.2,282.0ZM383.4,281.9L387.9,284.2L387.9,286.2L383.4,283.9ZM387.9,284.2L393.1,286.7L393.1,288.7L387.9,286.2ZM393.1,286.7L397.9,288.5L397.9,290.5L393.1,288.7ZM397.9,288.5L401.8,289.2L401.8,291.2L397.9,290.5ZM401.8,289.2L405.3,289.3L405.3,291.3L401.8,291.2ZM405.3,289.3L409.2,289.3L409.2,291.3L405.3,291.3ZM409.2,289.3L414.0,289.2L414.0,291.2L409.2,291.3ZM414.0,289.2L419.2,288.9L419.2,290.9L414.0,291.2ZM419.2,288.9L423.9,289.0L423.9,291.0L419.2,290.9ZM423.9,289.0L427.4,289.7L427.4,291.7L423.9,291.0ZM427.4,289.7L430.4,290.8L430.4,292.8L427.4,291.7ZM430.4,290.8L433.6,292.2L433.6,294.2L430.4,292.8ZM433.6,292.2L437.2,294.1L437.2,296.1L433.6,294.2ZM437.2,294.1L441.0,296.3L441.0,298.3L437.2,296.1ZM441.0,296.3L445.0,297.7L445.0,299.7L441.0,298.3ZM445.0,297.7L449.2,297.7L449.2,299.7L445.0,299.7ZM449.2,297.7L453.5,296.8L453.5,298.8L449.2,299.7ZM453.5,296.8L457.9,296.1L457.9,298.1L453.5,298.8ZM457.9,296.1L462.7,295.6L462.7,297.6L457.9,298.1ZM462.7,295.6L467.5,295.2L467.5,297.2L462.7,297.6ZM467.5,295.2L471.5,295.2L471.5,297.2L467.5,297.2ZM471.5,295.2L473.8,295.6L473.8,297.6L471.5,297.2ZM473.8,295.6L475.3,296.5L475.3,298.5L473.8,297.6ZM475.3,296.5L477.5,297.9L477.5,299.9L475.3,298.5ZM477.5,297.9L481.0,300.2L481.0,302.2L477.5,299.9ZM481.0,300.2L485.1,303.1L485.1,305.1L481.0,302.2ZM485.1,303.1L489.5,306.0L489.5,308.0L485.1,305.1ZM489.5,306.0L494.2,309.0L494.2,311.0L489.5,308.0ZM494.2,309.0L499.1,312.0L499.1,314.0L494.2,311.0ZM499.1,312.0L503.4,313.8L503.4,315.8L499.1,314.0ZM503.4,313.8L506.8,313.6L506.8,315.6L503.4,315.8ZM506.8,313.6L509.6,312.3L509.6,314.3L506.8,315.6ZM509.6,312.3L512.5,311.0L512.5,313.0L509.6,314.3ZM512.5,311.0L515.7,310.1L515.7,312.1L512.5,313.0ZM515.7,310.1L519.0,309.2L519.0,311.2L515.7,312.1ZM519.0,309.2L522.3,308.8L522.3,310.8L519.0,311.2ZM522.3,308.8L525.7,309.3L525.7,311.3L522.3,310.8ZM525.7,309.3L529.1,310.3L529.1,312.3L525.7,311.3ZM529.1,310.3L532.1,311.0L532.1,313.0L529.1,312.3ZM532.1,311.0L534.4,311.2L534.4,313.2L532.1,313.0ZM534.4,311.2L536.4,310.9L536.4,312.9L534.4,313.2ZM536.4,310.9L538.7,310.0L538.7,312.0L536.4,312.9ZM538.7,310.0L541.7,307.9L541.7,309.9L538.7,312.0ZM541.7,307.9L545.0,305.1L545.0,307.1L541.7,309.9ZM545.0,305.1L548.5,302.3L548.5,304.3L545.0,307.1ZM548.5,302.3L552.4,299.4L552.4,301.4L548.5,304.3ZM552.4,299.4L556.5,296.5L556.5,298.5L552.4,301.4ZM556.5,296.5L560.0,294.9L560.0,296.9L556.5,298.5ZM560.0,294.9L562.4,295.4L562.4,297.4L560.0,296.9ZM562.4,295.4L564.2,297.1L564.2,299.1L562.4,297.4ZM564.2,297.1L566.6,298.5L566.6,300.5L564.2,299.1ZM566.6,298.5L570.1,299.3L570.1,301.3L566.6,300.5ZM570.1,299.3L574.1,299.8L574.1,301.8L570.1,301.3ZM574.1,299.8L578.0,299.8L578.0,301.8L574.1,301.8ZM578.0,299.8L581.5,298.8L581.5,300.8L578.0,301.8ZM581.5,298.8L584.8,297.2L584.8,299.2L581.5,300.8ZM584.8,297.2L587.9,296.2L587.9,298.2L584.8,299.2ZM587.9,296.2L590.9,296.4L590.9,298.4L587.9,298.2ZM590.9,296.4L593.7,297.3L593.7,299.3L590.9,298.4ZM593.7,297.3L596.1,297.9L596.1,299.9L593.7,299.3ZM596.1,297.9L597.7,298.2L597.7,300.2L596.1,299.9ZM597.7,298.2L598.8,298.2L598.8,300.2L597.7,300.2ZM598.8,298.2L600.0,297.9L600.0,299.9L598.8,300.2ZM600.0,297.9L601.5,297.0L601.5,299.0L600.0,299.9ZM601.5,297.0L603.1,295.7L603.1,297.7L601.5,299.0ZM603.1,295.7L604.9,294.1L604.9,296.1L603.1,297.7ZM603.9,295.1L605.7,292.8L607.7,292.8L605.9,295.1ZM605.7,292.8L607.8,290.3L609.8,290.3L607.7,292.8ZM608.8,289.3L611.5,287.5L611.5,289.5L608.8,291.3ZM611.5,287.5L615.6,287.2L615.6,289.2L611.5,289.5ZM615.6,287.2L620.5,287.7L620.5,289.7L615.6,289.2ZM620.5,287.7L624.6,288.0L624.6,290.0L620.5,289.7ZM624.6,288.0L627.3,287.7L627.3,289.7L624.6,290.0ZM627.3,287.7L629.2,287.2L629.2,289.2L627.3,289.7ZM629.2,287.2L631.1,286.4L631.1,288.4L629.2,289.2ZM631.1,286.4L633.2,284.7L633.2,286.7L631.1,288.4ZM633.2,284.7L635.3,282.7L635.3,284.7L633.2,286.7ZM635.3,282.7L637.7,281.8L637.7,283.8L635.3,284.7ZM637.7,281.8L640.7,283.1L640.7,285.1L637.7,283.8ZM640.7,283.1L644.1,285.4L644.1,287.4L640.7,285.1ZM644.1,285.4L647.5,287.0L647.5,289.0L644.1,287.4ZM647.5,287.0L651.0,286.8L651.0,288.8L647.5,289.0ZM651.0,286.8L654.5,285.7L654.5,287.7L651.0,288.8ZM654.5,285.7L657.4,285.1L657.4,287.1L654.5,287.7ZM657.4,285.1L659.3,285.2L659.3,287.2L657.4,287.1ZM659.3,285.2L660.6,285.8L660.6,287.8L659.3,287.2ZM660.6,285.8L662.3,287.0L662.3,289.0L660.6,287.8ZM662.3,287.0L664.7,289.3L664.7,291.3L662.3,289.0ZM665.7,290.3L668.5,293.3L666.5,293.3L663.7,290.3ZM667.5,292.3L670.5,294.9L670.5,296.9L667.5,294.3ZM670.5,294.9L673.8,296.7L673.8,298.7L670.5,296.9ZM673.8,296.7L677.2,298.1L677.2,300.1L673.8,298.7ZM677.2,298.1L680.3,299.0L680.3,301.0L677.2,300.1ZM680.3,299.0L682.7,299.3L682.7,301.3L680.3,301.0ZM682.7,299.3L684.8,299.2L684.8,301.2L682.7,301.3ZM684.8,299.2L686.9,298.5L686.9,300.5L684.8,301.2ZM686.9,298.5L689.1,296.9L689.1,298.9L686.9,300.5ZM689.1,296.9L691.3,294.9L691.3,296.9L689.1,298.9ZM691.3,294.9L693.4,293.6L693.4,295.6L691.3,296.9ZM693.4,293.6L695.1,293.6L695.1,295.6L693.4,295.6ZM695.1,293.6L696.7,294.5L696.7,296.5L695.1,295.6ZM696.7,294.5L698.4,295.7L698.4,297.7L696.7,296.5ZM698.4,295.7L700.5,297.5L700.5,299.5L698.4,297.7ZM700.5,297.5L702.7,299.6L702.7,301.6L700.5,299.5ZM702.7,299.6L704.9,301.5L704.9,303.5L702.7,301.6ZM704.9,301.5L707.1,302.5L707.1,304.5L704.9,303.5ZM707.1,302.5L709.2,303.2L709.2,305.2L707.1,304.5ZM709.2,303.2L711.5,304.7L711.5,306.7L709.2,305.2ZM712.5,305.7L714.9,309.0L712.9,309.0L710.5,305.7ZM714.9,309.0L717.4,313.0L715.4,313.0L712.9,309.0ZM717.4,313.0L719.9,315.6L717.9,315.6L715.4,313.0ZM718.9,314.6L721.5,314.2L721.5,316.2L718.9,316.6ZM721.5,314.2L724.3,312.5L724.3,314.5L721.5,316.2ZM724.3,312.5L727.0,311.6L727.0,313.6L724.3,314.5ZM727.0,311.6L729.9,313.2L729.9,315.2L727.0,313.6ZM729.9,313.2L732.7,315.7L732.7,317.7L729.9,315.2ZM732.7,315.7L735.2,317.0L735.2,319.0L732.7,317.7ZM735.2,317.0L737.1,315.9L737.1,317.9L735.2,319.0ZM736.1,316.9L737.6,314.5L739.6,314.5L738.1,316.9ZM737.6,314.5L739.0,312.5L741.0,312.5L739.6,314.5ZM739.0,312.5L740.2,311.0L742.2,311.0L741.0,312.5ZM740.2,311.0L741.3,309.7L743.3,309.7L742.2,311.0ZM742.3,308.7L743.6,308.7L743.6,310.7L742.3,310.7ZM744.6,309.7L746.2,311.8L744.2,311.8L742.6,309.7ZM746.2,311.8L748.0,315.1L746.0,315.1L744.2,311.8ZM748.0,315.1L749.8,318.0L747.8,318.0L746.0,315.1ZM749.8,318.0L751.4,320.0L749.4,320.0L747.8,318.0ZM750.4,319.0L752.0,320.5L752.0,322.5L750.4,321.0ZM752.0,320.5L753.7,321.0L753.7,323.0L752.0,322.5ZM753.7,321.0L755.6,320.0L755.6,322.0L753.7,323.0ZM755.6,320.0L757.6,318.1L757.6,320.1L755.6,322.0ZM757.6,318.1L759.6,316.1L759.6,318.1L757.6,320.1ZM758.6,317.1L760.5,315.0L762.5,315.0L760.6,317.1ZM760.5,315.0L762.4,313.0L764.4,313.0L762.5,315.0ZM763.4,312.0L765.1,311.2L765.1,313.2L763.4,314.0ZM765.1,311.2L766.5,312.0L766.5,314.0L765.1,313.2ZM767.5,313.0L768.8,315.2L766.8,315.2L765.5,313.0ZM768.8,315.2L770.1,318.9L768.1,318.9L766.8,315.2ZM770.1,318.9L771.5,325.1L769.5,325.1L768.1,318.9ZM771.5,325.1L773.0,332.9L771.0,332.9L769.5,325.1ZM773.0,332.9L774.5,340.1L772.5,340.1L771.0,332.9ZM774.5,340.1L776.0,346.7L774.0,346.7L772.5,340.1ZM776.0,346.7L777.4,352.7L775.4,352.7L774.0,346.7ZM777.4,352.7L779.0,355.9L777.0,355.9L775.4,352.7ZM778.0,354.9L779.7,354.1L779.7,356.1L778.0,356.9ZM778.7,355.1L780.4,351.6L782.4,351.6L780.7,355.1ZM780.4,351.6L782.3,347.1L784.3,347.1L782.4,351.6ZM782.3,347.1L784.3,341.4L786.3,341.4L784.3,347.1ZM784.3,341.4L786.4,334.8L788.4,334.8L786.3,341.4ZM786.4,334.8L788.4,329.5L790.4,329.5L788.4,334.8ZM788.4,329.5L790.3,326.3L792.3,326.3L790.4,329.5ZM790.3,326.3L792.0,324.4L794.0,324.4L792.3,326.3ZM793.0,323.4L794.7,322.8L794.7,324.8L793.0,325.4ZM794.7,322.8L796.2,323.6L796.2,325.6L794.7,324.8ZM797.2,324.6L798.7,326.8L796.7,326.8L795.2,324.6ZM798.7,326.8L800.1,329.5L798.1,329.5L796.7,326.8ZM800.1,329.5L801.7,333.2L799.7,333.2L798.1,329.5ZM801.7,333.2L803.2,337.6L801.2,337.6L799.7,333.2ZM803.2,337.6L804.6,340.9L802.6,340.9L801.2,337.6ZM804.6,340.9L805.5,342.7L803.5,342.7L802.6,340.9ZM805.5,342.7L806.3,343.4L804.3,343.4L803.5,342.7ZM805.3,342.4L806.2,341.7L806.2,343.7L805.3,344.4ZM805.2,342.7L806.5,339.7L808.5,339.7L807.2,342.7ZM806.5,339.7L808.0,335.1L810.0,335.1L808.5,339.7ZM808.0,335.1L809.6,331.2L811.6,331.2L810.0,335.1ZM809.6,331.2L811.2,328.6L813.2,328.6L811.6,331.2ZM811.2,328.6L813.0,326.7L815.0,326.7L813.2,328.6ZM814.0,325.7L815.9,324.0L815.9,326.0L814.0,327.7ZM815.9,324.0L818.3,322.5L818.3,324.5L815.9,326.0ZM818.3,322.5L820.8,321.3L820.8,323.3L818.3,324.5ZM820.8,321.3L823.0,320.5L823.0,322.5L820.8,323.3ZM823.0,320.5L824.4,320.2L824.4,322.2L823.0,322.5ZM824.4,320.2L825.3,320.4L825.3,322.4L824.4,322.2ZM825.3,320.4L826.5,321.0L826.5,323.0L825.3,322.4ZM826.5,321.0L828.1,322.1L828.1,324.1L826.5,323.0ZM828.1,322.1L829.8,323.7L829.8,325.7L828.1,324.1ZM830.8,324.7L832.8,326.8L830.8,326.8L828.8,324.7ZM832.8,326.8L835.1,329.6L833.1,329.6L830.8,326.8ZM835.1,329.6L837.6,332.9L835.6,332.9L833.1,329.6ZM837.6,332.9L839.9,335.6L837.9,335.6L835.6,332.9ZM839.9,335.6L841.8,337.5L839.8,337.5L837.9,335.6ZM840.8,336.5L842.5,337.9L842.5,339.9L840.8,338.5ZM842.5,337.9L844.2,338.2L844.2,340.2L842.5,339.9ZM844.2,338.2L845.9,337.2L845.9,339.2L844.2,340.2ZM844.9,338.2L846.7,336.2L848.7,336.2L846.9,338.2ZM846.7,336.2L848.5,333.9L850.5,333.9L848.7,336.2ZM848.5,333.9L850.5,331.9L852.5,331.9L850.5,333.9ZM850.5,331.9L852.7,329.5L854.7,329.5L852.5,331.9ZM852.7,329.5L854.6,325.9L856.6,325.9L854.7,329.5ZM854.6,325.9L856.3,320.6L858.3,320.6L856.6,325.9ZM856.3,320.6L857.7,314.0L859.7,314.0L858.3,320.6ZM857.7,314.0L859.1,306.5L861.1,306.5L859.7,314.0ZM859.1,306.5L860.4,297.3L862.4,297.3L861.1,306.5ZM860.4,297.3L861.6,287.2L863.6,287.2L862.4,297.3ZM861.6,287.2L862.6,278.3L864.6,278.3L863.6,287.2ZM862.6,278.3L863.4,271.3L865.4,271.3L864.6,278.3ZM863.4,271.3L864.1,265.5L866.1,265.5L865.4,271.3ZM864.1,265.5L864.7,261.5L866.7,261.5L866.1,265.5ZM864.7,261.5L865.2,260.1L867.2,260.1L866.7,261.5ZM867.2,260.1L867.6,260.5L865.6,260.5L865.2,260.1ZM867.6,260.5L867.8,260.9L865.8,260.9L865.6,260.5Z" fill="#808000" stroke="none" shape-rendering="crispEdges"/>
<path d="M109.3,536.8L127.7,505.3L129.7,505.3L111.3,536.8ZM127.7,505.3L146.7,476.3L148.7,476.3L129.7,505.3ZM146.7,476.3L171.6,440.0L173.6,440.0L148.7,476.3ZM171.6,440.0L191.1,411.5L193.1,411.5L173.6,440.0ZM191.1,411.5L205.2,394.5L207.2,394.5L193.1,411.5ZM205.2,394.5L230.5,363.0L232.5,363.0L207.2,394.5ZM230.5,363.0L251.6,339.0L253.6,339.0L232.5,363.0ZM251.6,339.0L279.9,306.5L281.9,306.5L253.6,339.0ZM280.9,305.5L287.7,298.7L287.7,300.7L280.9,307.5ZM287.7,298.7L293.3,293.8L293.3,295.8L287.7,300.7ZM293.3,293.8L298.3,289.8L298.3,291.8L293.3,295.8ZM298.3,289.8L302.7,286.7L302.7,288.7L298.3,291.8ZM302.7,286.7L306.6,284.6L306.6,286.6L302.7,288.7ZM306.6,284.6L310.4,282.5L310.4,284.5L306.6,286.6ZM310.4,282.5L314.5,279.9L314.5,281.9L310.4,284.5ZM314.5,279.9L318.5,277.3L318.5,279.3L314.5,281.9ZM318.5,277.3L322.6,275.2L322.6,277.2L318.5,279.3ZM322.6,275.2L326.4,273.8L326.4,275.8L322.6,277.2ZM326.4,273.8L330.3,272.8L330.3,274.8L326.4,275.8ZM330.3,272.8L334.8,272.1L334.8,274.1L330.3,274.8ZM334.8,272.1L340.6,271.6L340.6,273.6L334.8,274.1ZM340.6,271.6L347.2,271.3L347.2,273.3L340.6,273.6ZM347.2,271.3L353.0,271.5L353.0,273.5L347.2,273.3ZM353.0,271.5L357.5,272.3L357.5,274.3L353.0,273.5ZM357.5,272.3L361.4,273.6L361.4,275.6L357.5,274.3ZM361.4,273.6L365.2,275.2L365.2,277.2L361.4,275.6ZM365.2,275.2L369.3,277.2L369.3,279.2L365.2,277.2ZM369.3,277.2L373.3,279.6L373.3,281.6L369.3,279.2ZM373.3,279.6L377.4,281.9L377.4,283.9L373.3,281.6ZM377.4,281.9L381.5,284.2L381.5,286.2L377.4,283.9ZM381.5,284.2L385.6,286.5L385.6,288.5L381.5,286.2ZM385.6,286.5L389.5,288.6L389.5,290.6L385.6,288.5ZM389.5,288.6L393.1,290.5L393.1,292.5L389.5,290.6ZM393.1,290.5L396.5,292.3L396.5,294.3L393.1,292.5ZM396.5,292.3L400.0,293.6L400.0,295.6L396.5,294.3ZM400.0,293.6L403.5,294.3L403.5,296.3L400.0,295.6ZM403.5,294.3L407.1,294.6L407.1,296.6L403.5,296.3ZM407.1,294.6L410.9,295.0L410.9,297.0L407.1,296.6ZM410.9,295.0L415.1,295.7L415.1,297.7L410.9,297.0ZM415.1,295.7L419.5,296.4L419.5,298.4L415.1,297.7ZM419.5,296.4L423.9,297.4L423.9,299.4L419.5,298.4ZM423.9,297.4L428.3,298.4L428.3,300.4L423.9,299.4ZM428.3,298.4L432.6,299.7L432.6,301.7L428.3,300.4ZM432.6,299.7L436.8,301.5L436.8,303.5L432.6,301.7ZM436.8,301.5L440.9,304.6L440.9,306.6L436.8,303.5ZM440.9,304.6L444.8,308.4L444.8,310.4L440.9,306.6ZM444.8,308.4L448.2,311.2L448.2,313.2L444.8,310.4ZM448.2,311.2L450.8,312.2L450.8,314.2L448.2,313.2ZM450.8,312.2L452.8,312.3L452.8,314.3L450.8,314.2ZM452.8,312.3L454.7,312.8L454.7,314.8L452.8,314.3ZM454.7,312.8L456.4,314.4L456.4,316.4L454.7,314.8ZM457.4,315.4L459.1,317.5L457.1,317.5L455.4,315.4ZM458.1,316.5L460.0,318.2L460.0,320.2L458.1,318.5ZM460.0,318.2L462.5,319.1L462.5,321.1L460.0,320.2ZM462.5,319.1L465.3,319.6L465.3,321.6L462.5,321.1ZM465.3,319.6L468.2,320.3L468.2,322.3L465.3,321.6ZM468.2,320.3L471.1,321.2L471.1,323.2L468.2,322.3ZM471.1,321.2L474.2,322.4L474.2,324.4L471.1,323.2ZM474.2,322.4L477.5,324.4L477.5,326.4L474.2,324.4ZM477.5,324.4L481.2,327.6L481.2,329.6L477.5,326.4ZM482.2,328.6L486.2,332.7L484.2,332.7L480.2,328.6ZM485.2,331.7L489.5,335.9L489.5,337.9L485.2,333.7ZM489.5,335.9L494.4,340.8L494.4,342.8L489.5,337.9ZM494.4,340.8L499.6,345.9L499.6,347.9L494.4,342.8ZM499.6,345.9L504.3,349.3L504.3,351.3L499.6,347.9ZM504.3,349.3L507.9,349.9L507.9,351.9L504.3,351.3ZM507.9,349.9L511.0,348.8L511.0,350.8L507.9,351.9ZM511.0,348.8L514.1,347.4L514.1,349.4L511.0,350.8ZM514.1,347.4L517.4,346.1L517.4,348.1L514.1,349.4ZM517.4,346.1L520.6,344.7L520.6,346.7L517.4,348.1ZM520.6,344.7L523.9,343.3L523.9,345.3L520.6,346.7ZM523.9,343.3L527.3,342.2L527.3,344.2L523.9,345.3ZM527.3,342.2L530.6,341.3L530.6,343.3L527.3,344.2ZM530.6,341.3L533.8,340.5L533.8,342.5L530.6,343.3ZM533.8,340.5L536.6,340.3L536.6,342.3L533.8,342.5ZM536.6,340.3L539.2,340.3L539.2,342.3L536.6,342.3ZM539.2,340.3L542.0,339.5L542.0,341.5L539.2,342.3ZM542.0,339.5L545.3,337.4L545.3,339.4L542.0,341.5ZM545.3,337.4L548.7,334.5L548.7,336.5L545.3,339.4ZM548.7,334.5L551.8,331.8L551.8,333.8L548.7,336.5ZM551.8,331.8L554.3,329.6L554.3,331.6L551.8,333.8ZM554.3,329.6L556.4,327.5L556.4,329.5L554.3,331.6ZM556.4,327.5L558.4,326.0L558.4,328.0L556.4,329.5ZM558.4,326.0L559.9,325.0L559.9,327.0L558.4,328.0ZM559.9,325.0L561.2,324.5L561.2,326.5L559.9,327.0ZM561.2,324.5L563.3,324.7L563.3,326.7L561.2,326.5ZM563.3,324.7L566.6,326.2L566.6,328.2L563.3,326.7ZM566.6,326.2L570.6,328.5L570.6,330.5L566.6,328.2ZM570.6,328.5L574.8,329.8L574.8,331.8L570.6,330.5ZM574.8,329.8L579.2,329.3L579.2,331.3L574.8,331.8ZM579.2,329.3L583.8,327.9L583.8,329.9L579.2,331.3ZM583.8,327.9L587.9,326.9L587.9,328.9L583.8,329.9ZM587.9,326.9L591.0,326.8L591.0,328.8L587.9,328.9ZM591.0,326.8L593.5,327.1L593.5,329.1L591.0,328.8ZM593.5,327.1L596.1,327.7L596.1,329.7L593.5,329.1ZM596.1,327.7L598.8,328.7L598.8,330.7L596.1,329.7ZM598.8,328.7L601.5,329.9L601.5,331.9L598.8,330.7ZM601.5,329.9L604.3,330.6L604.3,332.6L601.5,331.9ZM604.3,330.6L607.3,330.3L607.3,332.3L604.3,332.6ZM607.3,330.3L610.3,329.6L610.3,331.6L607.3,332.3ZM610.3,329.6L613.1,329.0L613.1,331.0L610.3,331.6ZM613.1,329.0L615.3,328.6L615.3,330.6L613.1,331.0ZM615.3,328.6L617.2,328.4L617.2,330.4L615.3,330.6ZM617.2,328.4L619.7,329.0L619.7,331.0L617.2,330.4ZM619.7,329.0L623.2,331.2L623.2,333.2L619.7,331.0ZM623.2,331.2L627.2,334.1L627.2,336.1L623.2,333.2ZM627.2,334.1L631.1,335.9L631.1,337.9L627.2,336.1ZM631.1,335.9L634.5,335.4L634.5,337.4L631.1,337.9ZM634.5,335.4L637.6,333.7L637.6,335.7L634.5,337.4ZM637.6,333.7L641.0,332.9L641.0,334.9L637.6,335.7ZM641.0,332.9L644.8,333.9L644.8,335.9L641.0,334.9ZM644.8,333.9L648.7,335.8L648.7,337.8L644.8,335.9ZM648.7,335.8L652.5,337.2L652.5,339.2L648.7,337.8ZM652.5,337.2L656.0,337.4L656.0,339.4L652.5,339.2ZM656.0,337.4L659.2,337.1L659.2,339.1L656.0,339.4ZM659.2,337.1L662.3,337.5L662.3,339.5L659.2,339.1ZM662.3,337.5L665.2,339.2L665.2,341.2L662.3,339.5ZM665.2,339.2L667.9,341.6L667.9,343.6L665.2,341.2ZM667.9,341.6L670.5,344.1L670.5,346.1L667.9,343.6ZM671.5,345.1L674.1,347.9L672.1,347.9L669.5,345.1ZM674.1,347.9L676.6,350.9L674.6,350.9L672.1,347.9ZM675.6,349.9L677.9,352.0L677.9,354.0L675.6,351.9ZM677.9,352.0L679.7,352.7L679.7,354.7L677.9,354.0ZM679.7,352.7L681.4,352.5L681.4,354.5L679.7,354.7ZM681.4,352.5L683.6,351.5L683.6,353.5L681.4,354.5ZM683.6,351.5L686.8,349.2L686.8,351.2L683.6,353.5ZM686.8,349.2L690.6,346.1L690.6,348.1L686.8,351.2ZM690.6,346.1L694.3,344.4L694.3,346.4L690.6,348.1ZM694.3,344.4L697.9,345.1L697.9,347.1L694.3,346.4ZM697.9,345.1L701.4,347.1L701.4,349.1L697.9,347.1ZM701.4,347.1L704.9,349.3L704.9,351.3L701.4,349.1ZM704.9,349.3L708.4,351.4L708.4,353.4L704.9,351.3ZM708.4,351.4L711.8,353.6L711.8,355.6L708.4,353.4ZM711.8,353.6L714.8,355.6L714.8,357.6L711.8,355.6ZM714.8,355.6L717.3,357.3L717.3,359.3L714.8,357.6ZM717.3,357.3L719.4,358.9L719.4,360.9L717.3,359.3ZM719.4,358.9L721.3,360.1L721.3,362.1L719.4,360.9ZM721.3,360.1L723.1,360.7L723.1,362.7L721.3,362.1ZM723.1,360.7L724.6,360.9L724.6,362.9L723.1,362.7ZM724.6,360.9L726.2,361.5L726.2,363.5L724.6,362.9ZM726.2,361.5L727.8,362.8L727.8,364.8L726.2,363.5ZM728.8,363.8L730.5,365.5L728.5,365.5L726.8,363.8ZM730.5,365.5L732.1,367.4L730.1,367.4L728.5,365.5ZM732.1,367.4L733.8,370.0L731.8,370.0L730.1,367.4ZM733.8,370.0L735.5,372.9L733.5,372.9L731.8,370.0ZM735.5,372.9L737.1,374.8L735.1,374.8L733.5,372.9ZM736.1,373.8L737.5,374.0L737.5,376.0L736.1,375.8ZM737.5,374.0L738.7,373.1L738.7,375.1L737.5,376.0ZM738.7,373.1L740.0,372.3L740.0,374.3L738.7,375.1ZM740.0,372.3L741.3,371.6L741.3,373.6L740.0,374.3ZM741.3,371.6L742.6,370.9L742.6,372.9L741.3,373.6ZM742.6,370.9L744.0,370.9L744.0,372.9L742.6,372.9ZM744.0,370.9L745.7,372.2L745.7,374.2L744.0,372.9ZM746.7,373.2L748.4,375.3L746.4,375.3L744.7,373.2ZM748.4,375.3L750.1,377.3L748.1,377.3L746.4,375.3ZM750.1,377.3L751.5,379.3L749.5,379.3L748.1,377.3ZM751.5,379.3L752.8,381.2L750.8,381.2L749.5,379.3ZM751.8,380.2L753.1,381.0L753.1,383.0L751.8,382.2ZM753.1,381.0L754.4,380.2L754.4,382.2L753.1,383.0ZM753.4,381.2L754.8,379.4L756.8,379.4L755.4,381.2ZM754.8,379.4L756.1,377.3L758.1,377.3L756.8,379.4ZM756.1,377.3L757.5,375.0L759.5,375.0L758.1,377.3ZM757.5,375.0L758.8,372.5L760.8,372.5L759.5,375.0ZM758.8,372.5L760.2,370.3L762.2,370.3L760.8,372.5ZM760.2,370.3L761.5,368.4L763.5,368.4L762.2,370.3ZM761.5,368.4L762.9,366.9L764.9,366.9L763.5,368.4ZM763.9,365.9L765.2,365.6L765.2,367.6L763.9,367.9ZM766.2,366.6L767.6,368.0L765.6,368.0L764.2,366.6ZM767.6,368.0L768.9,370.6L766.9,370.6L765.6,368.0ZM768.9,370.6L770.3,374.3L768.3,374.3L766.9,370.6ZM770.3,374.3L771.6,379.4L769.6,379.4L768.3,374.3ZM771.6,379.4L772.9,385.5L770.9,385.5L769.6,379.4ZM772.9,385.5L774.3,391.4L772.3,391.4L770.9,385.5ZM774.3,391.4L775.9,397.2L773.9,397.2L772.3,391.4ZM775.9,397.2L777.7,402.8L775.7,402.8L773.9,397.2ZM777.7,402.8L779.3,406.2L777.3,406.2L775.7,402.8ZM778.3,405.2L779.7,405.5L779.7,407.5L778.3,407.2ZM778.7,406.5L779.9,404.6L781.9,404.6L780.7,406.5ZM779.9,404.6L781.4,401.5L783.4,401.5L781.9,404.6ZM781.4,401.5L783.3,396.8L785.3,396.8L783.4,401.5ZM783.3,396.8L785.4,390.8L787.4,390.8L785.3,396.8ZM785.4,390.8L787.4,385.4L789.4,385.4L787.4,390.8ZM787.4,385.4L789.0,380.8L791.0,380.8L789.4,385.4ZM789.0,380.8L790.5,376.8L792.5,376.8L791.0,380.8ZM790.5,376.8L791.9,373.9L793.9,373.9L792.5,376.8ZM791.9,373.9L793.2,372.5L795.2,372.5L793.9,373.9ZM794.2,371.5L795.3,371.2L795.3,373.2L794.2,373.5ZM795.3,371.2L796.5,372.3L796.5,374.3L795.3,373.2ZM797.5,373.3L798.8,376.1L796.8,376.1L795.5,373.3ZM798.8,376.1L800.1,380.3L798.1,380.3L796.8,376.1ZM800.1,380.3L801.5,384.4L799.5,384.4L798.1,380.3ZM801.5,384.4L803.0,388.7L801.0,388.7L799.5,384.4ZM803.0,388.7L804.5,393.0L802.5,393.0L801.0,388.7ZM804.5,393.0L806.0,395.5L804.0,395.5L802.5,393.0ZM805.0,394.5L806.3,393.9L806.3,395.9L805.0,396.5ZM805.3,394.9L806.4,392.4L808.4,392.4L807.3,394.9ZM806.4,392.4L807.6,390.4L809.6,390.4L808.4,392.4ZM808.6,389.4L809.7,388.3L809.7,390.3L808.6,391.4ZM809.7,388.3L810.9,387.7L810.9,389.7L809.7,390.3ZM810.9,387.7L812.2,388.0L812.2,390.0L810.9,389.7ZM813.2,389.0L814.9,390.8L812.9,390.8L811.2,389.0ZM814.9,390.8L816.8,393.6L814.8,393.6L812.9,390.8ZM816.8,393.6L818.7,396.5L816.7,396.5L814.8,393.6ZM818.7,396.5L820.7,399.8L818.7,399.8L816.7,396.5ZM820.7,399.8L822.7,403.2L820.7,403.2L818.7,399.8ZM821.7,402.2L823.7,404.0L823.7,406.0L821.7,404.2ZM823.7,404.0L825.5,403.5L825.5,405.5L823.7,406.0ZM824.5,404.5L826.2,402.4L828.2,402.4L826.5,404.5ZM826.2,402.4L827.8,399.5L829.8,399.5L828.2,402.4ZM827.8,399.5L829.3,395.8L831.3,395.8L829.8,399.5ZM829.3,395.8L830.6,391.3L832.6,391.3L831.3,395.8ZM830.6,391.3L831.8,386.4L833.8,386.4L832.6,391.3ZM831.8,386.4L832.8,380.9L834.8,380.9L833.8,386.4ZM832.8,380.9L833.8,375.2L835.8,375.2L834.8,380.9ZM833.8,375.2L834.8,370.3L836.8,370.3L835.8,375.2ZM834.8,370.3L836.1,366.7L838.1,366.7L836.8,370.3ZM836.1,366.7L837.4,364.0L839.4,364.0L838.1,366.7ZM838.4,363.0L839.9,361.6L839.9,363.6L838.4,365.0ZM839.9,361.6L841.4,361.9L841.4,363.9L839.9,363.6ZM841.4,361.9L843.0,363.4L843.0,365.4L841.4,363.9ZM843.0,363.4L844.9,365.2L844.9,367.2L843.0,365.4ZM844.9,365.2L847.2,367.3L847.2,369.3L844.9,367.2ZM847.2,367.3L849.8,369.6L849.8,371.6L847.2,369.3ZM849.8,369.6L852.0,370.9L852.0,372.9L849.8,371.6ZM852.0,370.9L853.6,370.7L853.6,372.7L852.0,372.9ZM852.6,371.7L853.8,370.4L855.8,370.4L854.6,371.7ZM853.8,370.4L855.0,368.2L857.0,368.2L855.8,370.4ZM855.0,368.2L856.4,364.9L858.4,364.9L857.0,368.2ZM856.4,364.9L857.8,360.7L859.8,360.7L858.4,364.9ZM857.8,360.7L859.0,356.1L861.0,356.1L859.8,360.7ZM859.0,356.1L859.8,351.1L861.8,351.1L861.0,356.1ZM859.8,351.1L860.4,345.6L862.4,345.6L861.8,351.1ZM860.4,345.6L861.1,340.0L863.1,340.0L862.4,345.6ZM861.1,340.0L861.9,333.9L863.9,333.9L863.1,340.0ZM861.9,333.9L862.7,327.6L864.7,327.6L863.9,333.9ZM862.7,327.6L863.5,322.4L865.5,322.4L864.7,327.6ZM863.5,322.4L864.2,318.9L866.2,318.9L865.5,322.4ZM864.2,318.9L864.9,316.5L866.9,316.5L866.2,318.9ZM864.9,316.5L865.4,315.0L867.4,315.0L866.9,316.5Z" fill="#808000" stroke="none" shape-rendering="crispEdges"/>
<path d="M109.3,547.4L127.7,517.9L129.7,517.9L111.3,547.4ZM127.7,517.9L146.7,490.7L148.7,490.7L129.7,517.9ZM146.7,490.7L162.5,464.2L164.5,464.2L148.7,490.7ZM162.5,464.2L178.7,440.8L180.7,440.8L164.5,464.2ZM178.7,440.8L192.3,422.3L194.3,422.3L180.7,440.8ZM192.3,422.3L205.2,405.3L207.2,405.3L194.3,422.3ZM205.2,405.3L230.5,373.0L232.5,373.0L207.2,405.3ZM230.5,373.0L251.6,346.8L253.6,346.8L232.5,373.0ZM251.6,346.8L275.9,320.5L277.9,320.5L253.6,346.8ZM276.9,319.5L284.0,313.4L284.0,315.4L276.9,321.5ZM284.0,313.4L290.5,308.7L290.5,310.7L284.0,315.4ZM290.5,308.7L295.8,305.0L295.8,307.0L290.5,310.7ZM295.8,305.0L299.1,302.7L299.1,304.7L295.8,307.0ZM299.1,302.7L301.3,301.6L301.3,303.6L299.1,304.7ZM301.3,301.6L304.3,300.1L304.3,302.1L301.3,303.6ZM304.3,300.1L309.1,297.8L309.1,299.8L304.3,302.1ZM309.1,297.8L314.7,295.1L314.7,297.1L309.1,299.8ZM314.7,295.1L320.2,292.8L320.2,294.8L314.7,297.1ZM320.2,292.8L325.4,290.9L325.4,292.9L320.2,294.8ZM325.4,290.9L330.5,289.2L330.5,291.2L325.4,292.9ZM330.5,289.2L334.8,287.9L334.8,289.9L330.5,291.2ZM334.8,287.9L337.5,287.2L337.5,289.2L334.8,289.9ZM337.5,287.2L339.3,286.9L339.3,288.9L337.5,289.2ZM339.3,286.9L342.1,286.7L342.1,288.7L339.3,288.9ZM342.1,286.7L347.0,286.5L347.0,288.5L342.1,288.7ZM347.0,286.5L352.8,286.5L352.8,288.5L347.0,288.5ZM352.8,286.5L357.9,286.7L357.9,288.7L352.8,288.5ZM357.9,286.7L361.6,287.2L361.6,289.2L357.9,288.7ZM361.6,287.2L364.6,287.8L364.6,289.8L361.6,289.2ZM364.6,287.8L367.6,288.9L367.6,290.9L364.6,289.8ZM367.6,288.9L370.8,290.4L370.8,292.4L367.6,290.9ZM370.8,290.4L374.0,292.3L374.0,294.3L370.8,292.4ZM374.0,292.3L377.4,294.3L377.4,296.3L374.0,294.3ZM377.4,294.3L381.3,296.6L381.3,298.6L377.4,296.3ZM381.3,296.6L385.5,299.1L385.5,301.1L381.3,298.6ZM385.5,299.1L389.5,301.3L389.5,303.3L385.5,301.1ZM389.5,301.3L393.3,303.2L393.3,305.2L389.5,303.3ZM393.3,303.2L397.0,304.9L397.0,306.9L393.3,305.2ZM397.0,304.9L400.0,306.2L400.0,308.2L397.0,306.9ZM400.0,306.2L401.4,307.1L401.4,309.1L400.0,308.2ZM401.4,307.1L402.2,307.6L402.2,309.6L401.4,309.1ZM402.2,307.6L404.4,308.0L404.4,310.0L402.2,309.6ZM404.4,308.0L409.5,308.3L409.5,310.3L404.4,310.0ZM409.5,308.3L416.0,308.4L416.0,310.4L409.5,310.3ZM416.0,308.4L422.2,309.1L422.2,311.1L416.0,310.4ZM422.2,309.1L427.4,310.4L427.4,312.4L422.2,311.1ZM427.4,310.4L432.3,312.2L432.3,314.2L427.4,312.4ZM432.3,312.2L436.8,314.5L436.8,316.5L432.3,314.2ZM436.8,314.5L441.0,317.9L441.0,319.9L436.8,316.5ZM442.0,318.9L445.9,322.9L443.9,322.9L440.0,318.9ZM444.9,321.9L448.2,325.0L448.2,327.0L444.9,323.9ZM448.2,325.0L450.8,326.4L450.8,328.4L448.2,327.0ZM450.8,326.4L452.8,327.0L452.8,329.0L450.8,328.4ZM452.8,327.0L454.7,327.9L454.7,329.9L452.8,329.0ZM454.7,327.9L456.5,329.7L456.5,331.7L454.7,329.9ZM457.5,330.7L459.2,332.8L457.2,332.8L455.5,330.7ZM459.2,332.8L461.0,334.9L459.0,334.9L457.2,332.8ZM461.0,334.9L463.0,337.0L461.0,337.0L459.0,334.9ZM463.0,337.0L465.1,339.2L463.1,339.2L461.0,337.0ZM464.1,338.2L466.6,340.0L466.6,342.0L464.1,340.2ZM466.6,340.0L469.4,340.9L469.4,342.9L466.6,342.0ZM469.4,340.9L472.7,341.6L472.7,343.6L469.4,342.9ZM472.7,341.6L476.4,343.3L476.4,345.3L472.7,343.6ZM476.4,343.3L481.0,347.1L481.0,349.1L476.4,345.3ZM481.0,347.1L486.2,352.0L486.2,354.0L481.0,349.1ZM486.2,352.0L491.1,356.4L491.1,358.4L486.2,354.0ZM491.1,356.4L495.4,360.3L495.4,362.3L491.1,358.4ZM495.4,360.3L499.5,363.7L499.5,365.7L495.4,362.3ZM499.5,363.7L503.4,365.7L503.4,367.7L499.5,365.7ZM503.4,365.7L507.2,365.6L507.2,367.6L503.4,367.7ZM507.2,365.6L510.8,364.1L510.8,366.1L507.2,367.6ZM510.8,364.1L514.1,362.1L514.1,364.1L510.8,366.1ZM514.1,362.1L517.0,359.6L517.0,361.6L514.1,364.1ZM516.0,360.6L518.7,357.6L520.7,357.6L518.0,360.6ZM518.7,357.6L521.3,354.9L523.3,354.9L520.7,357.6ZM522.3,353.9L525.0,351.8L525.0,353.8L522.3,355.9ZM525.0,351.8L527.8,349.9L527.8,351.9L525.0,353.8ZM527.8,349.9L530.5,348.2L530.5,350.2L527.8,351.9ZM530.5,348.2L533.2,346.7L533.2,348.7L530.5,350.2ZM533.2,346.7L536.0,345.3L536.0,347.3L533.2,348.7ZM536.0,345.3L538.7,344.1L538.7,346.1L536.0,347.3ZM538.7,344.1L541.3,343.3L541.3,345.3L538.7,346.1ZM541.3,343.3L543.9,342.7L543.9,344.7L541.3,345.3ZM543.9,342.7L546.9,341.1L546.9,343.1L543.9,344.7ZM546.9,341.1L550.7,337.7L550.7,339.7L546.9,343.1ZM549.7,338.7L553.8,334.3L555.8,334.3L551.7,338.7ZM554.8,333.3L558.4,330.1L558.4,332.1L554.8,335.3ZM558.4,330.1L560.8,328.6L560.8,330.6L558.4,332.1ZM560.8,328.6L562.7,328.3L562.7,330.3L560.8,330.6ZM562.7,328.3L564.9,329.0L564.9,331.0L562.7,330.3ZM564.9,329.0L568.1,331.3L568.1,333.3L564.9,331.0ZM568.1,331.3L571.6,334.6L571.6,336.6L568.1,333.3ZM571.6,334.6L574.8,337.5L574.8,339.5L571.6,336.6ZM574.8,337.5L577.2,339.4L577.2,341.4L574.8,339.5ZM577.2,339.4L579.1,341.0L579.1,343.0L577.2,341.4ZM579.1,341.0L581.3,342.1L581.3,344.1L579.1,343.0ZM581.3,342.1L583.9,342.6L583.9,344.6L581.3,344.1ZM583.9,342.6L586.7,342.7L586.7,344.7L583.9,344.6ZM586.7,342.7L589.5,343.3L589.5,345.3L586.7,344.7ZM589.5,343.3L592.3,344.7L592.3,346.7L589.5,345.3ZM592.3,344.7L595.0,346.6L595.0,348.6L592.3,346.7ZM595.0,346.6L597.7,349.0L597.7,351.0L595.0,348.6ZM598.7,350.0L601.1,353.1L599.1,353.1L596.7,350.0ZM601.1,353.1L603.3,356.6L601.3,356.6L599.1,353.1ZM603.3,356.6L605.9,360.0L603.9,360.0L601.3,356.6ZM604.9,359.0L608.0,361.9L608.0,363.9L604.9,361.0ZM608.0,361.9L611.4,364.7L611.4,366.7L608.0,363.9ZM611.4,364.7L614.8,367.2L614.8,369.2L611.4,366.7ZM614.8,367.2L618.1,369.4L618.1,371.4L614.8,369.2ZM618.1,369.4L621.4,371.5L621.4,373.5L618.1,371.4ZM621.4,371.5L624.6,373.8L624.6,375.8L621.4,373.5ZM625.6,374.8L628.7,377.9L626.7,377.9L623.6,374.8ZM628.7,377.9L631.6,381.4L629.6,381.4L626.7,377.9ZM630.6,380.4L633.6,382.8L633.6,384.8L630.6,382.4ZM633.6,382.8L636.7,383.5L636.7,385.5L633.6,384.8ZM636.7,383.5L639.8,383.2L639.8,385.2L636.7,385.5ZM639.8,383.2L642.6,383.1L642.6,385.1L639.8,385.2ZM642.6,383.1L645.0,383.6L645.0,385.6L642.6,385.1ZM645.0,383.6L647.1,384.3L647.1,386.3L645.0,385.6ZM647.1,384.3L649.2,385.2L649.2,387.2L647.1,386.3ZM649.2,385.2L651.4,386.5L651.4,388.5L649.2,387.2ZM651.4,386.5L653.5,388.0L653.5,390.0L651.4,388.5ZM653.5,388.0L655.7,389.3L655.7,391.3L653.5,390.0ZM655.7,389.3L657.9,390.3L657.9,392.3L655.7,391.3ZM657.9,390.3L660.2,391.2L660.2,393.2L657.9,392.3ZM660.2,391.2L662.3,391.8L662.3,393.8L660.2,393.2ZM662.3,391.8L664.1,391.9L664.1,393.9L662.3,393.8ZM664.1,391.9L665.9,391.7L665.9,393.7L664.1,393.9ZM665.9,391.7L668.0,392.1L668.0,394.1L665.9,393.7ZM668.0,392.1L671.0,393.9L671.0,395.9L668.0,394.1ZM671.0,393.9L674.3,396.3L674.3,398.3L671.0,395.9ZM674.3,396.3L677.0,398.0L677.0,400.0L674.3,398.3ZM677.0,398.0L678.4,398.5L678.4,400.5L677.0,400.0ZM678.4,398.5L679.2,398.2L679.2,400.2L678.4,400.5ZM679.2,398.2L680.3,397.5L680.3,399.5L679.2,400.2ZM680.3,397.5L682.3,396.1L682.3,398.1L680.3,399.5ZM682.3,396.1L684.7,394.2L684.7,396.2L682.3,398.1ZM684.7,394.2L686.9,392.6L686.9,394.6L684.7,396.2ZM686.9,392.6L688.8,391.5L688.8,393.5L686.9,394.6ZM688.8,391.5L690.5,390.8L690.5,392.8L688.8,393.5ZM690.5,390.8L692.1,391.0L692.1,393.0L690.5,392.8ZM692.1,391.0L693.6,392.5L693.6,394.5L692.1,393.0ZM694.6,393.5L696.0,396.0L694.0,396.0L692.6,393.5ZM696.0,396.0L697.7,399.3L695.7,399.3L694.0,396.0ZM697.7,399.3L699.8,403.8L697.8,403.8L695.7,399.3ZM699.8,403.8L702.2,409.2L700.2,409.2L697.8,403.8ZM702.2,409.2L704.3,414.1L702.3,414.1L700.2,409.2ZM704.3,414.1L706.0,417.8L704.0,417.8L702.3,414.1ZM706.0,417.8L707.5,421.0L705.5,421.0L704.0,417.8ZM707.5,421.0L709.2,424.8L707.2,424.8L705.5,421.0ZM709.2,424.8L711.4,429.9L709.4,429.9L707.2,424.8ZM711.4,429.9L713.7,435.5L711.7,435.5L709.4,429.9ZM713.7,435.5L715.8,440.3L713.8,440.3L711.7,435.5ZM715.8,440.3L717.4,443.8L715.4,443.8L713.8,440.3ZM717.4,443.8L718.8,446.5L716.8,446.5L715.4,443.8ZM718.8,446.5L719.9,448.5L717.9,448.5L716.8,446.5ZM719.9,448.5L720.7,449.7L718.7,449.7L717.9,448.5ZM719.7,448.7L720.3,449.1L720.3,451.1L719.7,450.7ZM720.3,449.1L721.3,448.8L721.3,450.8L720.3,451.1ZM721.3,448.8L722.9,447.5L722.9,449.5L721.3,450.8ZM721.9,448.5L723.9,446.5L725.9,446.5L723.9,448.5ZM724.9,445.5L727.0,443.4L727.0,445.4L724.9,447.5ZM727.0,443.4L729.4,441.5L729.4,443.5L727.0,445.4ZM729.4,441.5L732.1,439.4L732.1,441.4L729.4,443.5ZM731.1,440.4L733.4,437.9L735.4,437.9L733.1,440.4ZM733.4,437.9L735.2,434.4L737.2,434.4L735.4,437.9ZM735.2,434.4L736.8,430.4L738.8,430.4L737.2,434.4ZM736.8,430.4L738.3,427.2L740.3,427.2L738.8,430.4ZM738.3,427.2L739.7,425.2L741.7,425.2L740.3,427.2ZM740.7,424.2L742.1,423.0L742.1,425.0L740.7,426.2ZM742.1,423.0L743.4,422.6L743.4,424.6L742.1,425.0ZM743.4,422.6L744.7,423.0L744.7,425.0L743.4,424.6ZM744.7,423.0L746.1,424.1L746.1,426.1L744.7,425.0ZM747.1,425.1L748.5,427.2L746.5,427.2L745.1,425.1ZM748.5,427.2L750.2,430.8L748.2,430.8L746.5,427.2ZM750.2,430.8L752.0,435.2L750.0,435.2L748.2,430.8ZM752.0,435.2L753.5,438.7L751.5,438.7L750.0,435.2ZM753.5,438.7L754.4,440.5L752.4,440.5L751.5,438.7ZM754.4,440.5L755.1,441.3L753.1,441.3L752.4,440.5ZM754.1,440.3L754.9,440.6L754.9,442.6L754.1,442.3ZM754.9,440.6L756.2,440.3L756.2,442.3L754.9,442.6ZM756.2,440.3L757.6,439.5L757.6,441.5L756.2,442.3ZM757.6,439.5L759.2,438.9L759.2,440.9L757.6,441.5ZM759.2,438.9L760.8,438.4L760.8,440.4L759.2,440.9ZM760.8,438.4L762.5,438.1L762.5,440.1L760.8,440.4ZM762.5,438.1L764.2,438.9L764.2,440.9L762.5,440.1ZM765.2,439.9L766.9,442.1L764.9,442.1L763.2,439.9ZM766.9,442.1L768.6,445.4L766.6,445.4L764.9,442.1ZM768.6,445.4L770.3,449.9L768.3,449.9L766.6,445.4ZM770.3,449.9L772.0,456.4L770.0,456.4L768.3,449.9ZM772.0,456.4L773.7,464.2L771.7,464.2L770.0,456.4ZM773.7,464.2L775.3,471.1L773.3,471.1L771.7,464.2ZM775.3,471.1L776.7,476.8L774.7,476.8L773.3,471.1ZM776.7,476.8L778.1,481.6L776.1,481.6L774.7,476.8ZM778.1,481.6L779.3,484.8L777.3,484.8L776.1,481.6ZM779.3,484.8L780.3,486.3L778.3,486.3L777.3,484.8ZM779.3,485.3L780.3,485.2L780.3,487.2L779.3,487.3ZM779.3,486.2L780.4,484.2L782.4,484.2L781.3,486.2ZM780.4,484.2L781.9,479.8L783.9,479.8L782.4,484.2ZM781.9,479.8L783.7,473.6L785.7,473.6L783.9,479.8ZM783.7,473.6L785.4,467.1L787.4,467.1L785.7,473.6ZM785.4,467.1L787.1,460.4L789.1,460.4L787.4,467.1ZM787.1,460.4L788.8,453.4L790.8,453.4L789.1,460.4ZM788.8,453.4L790.4,447.9L792.4,447.9L790.8,453.4ZM790.4,447.9L791.8,444.4L793.8,444.4L792.4,447.9ZM791.8,444.4L793.2,442.4L795.2,442.4L793.8,444.4ZM794.2,441.4L795.5,440.9L795.5,442.9L794.2,443.4ZM796.5,441.9L797.8,443.4L795.8,443.4L794.5,441.9ZM797.8,443.4L799.1,446.5L797.1,446.5L795.8,443.4ZM799.1,446.5L800.5,449.9L798.5,449.9L797.1,446.5ZM800.5,449.9L802.1,453.8L800.1,453.8L798.5,449.9ZM802.1,453.8L803.7,458.0L801.7,458.0L800.1,453.8ZM803.7,458.0L805.2,461.0L803.2,461.0L801.7,458.0ZM804.2,460.0L805.4,460.9L805.4,462.9L804.2,462.0ZM805.4,460.9L806.5,460.6L806.5,462.6L805.4,462.9ZM806.5,460.6L807.6,460.0L807.6,462.0L806.5,462.6ZM807.6,460.0L808.6,459.1L808.6,461.1L807.6,462.0ZM807.6,460.1L808.5,459.0L810.5,459.0L809.6,460.1ZM809.5,458.0L810.6,458.0L810.6,460.0L809.5,460.0ZM811.6,459.0L812.8,460.6L810.8,460.6L809.6,459.0ZM812.8,460.6L814.1,463.4L812.1,463.4L810.8,460.6ZM814.1,463.4L815.6,467.1L813.6,467.1L812.1,463.4ZM815.6,467.1L817.3,472.6L815.3,472.6L813.6,467.1ZM817.3,472.6L819.1,479.1L817.1,479.1L815.3,472.6ZM819.1,479.1L820.7,484.2L818.7,484.2L817.1,479.1ZM820.7,484.2L821.9,487.0L819.9,487.0L818.7,484.2ZM821.9,487.0L822.8,488.4L820.8,488.4L819.9,487.0ZM821.8,487.4L822.7,487.9L822.7,489.9L821.8,489.4ZM822.7,487.9L823.7,487.7L823.7,489.7L822.7,489.9ZM822.7,488.7L823.6,487.4L825.6,487.4L824.7,488.7ZM823.6,487.4L824.7,484.8L826.7,484.8L825.6,487.4ZM824.7,484.8L826.0,480.4L828.0,480.4L826.7,484.8ZM826.0,480.4L827.4,474.6L829.4,474.6L828.0,480.4ZM827.4,474.6L828.8,468.1L830.8,468.1L829.4,474.6ZM828.8,468.1L830.2,460.5L832.2,460.5L830.8,468.1ZM830.2,460.5L831.5,452.3L833.5,452.3L832.2,460.5ZM831.5,452.3L832.8,444.9L834.8,444.9L833.5,452.3ZM832.8,444.9L833.9,438.8L835.9,438.8L834.8,444.9ZM833.9,438.8L834.8,433.6L836.8,433.6L835.9,438.8ZM834.8,433.6L835.8,429.8L837.8,429.8L836.8,433.6ZM835.8,429.8L836.8,427.4L838.8,427.4L837.8,429.8ZM836.8,427.4L837.7,426.4L839.7,426.4L838.8,427.4ZM838.7,425.4L839.9,425.7L839.9,427.7L838.7,427.4ZM840.9,426.7L842.4,428.6L840.4,428.6L838.9,426.7ZM842.4,428.6L844.1,431.9L842.1,431.9L840.4,428.6ZM844.1,431.9L845.9,435.8L843.9,435.8L842.1,431.9ZM845.9,435.8L847.9,440.6L845.9,440.6L843.9,435.8ZM847.9,440.6L850.1,446.0L848.1,446.0L845.9,440.6ZM850.1,446.0L852.0,449.9L850.0,449.9L848.1,446.0ZM852.0,449.9L853.5,451.5L851.5,451.5L850.0,449.9ZM852.5,450.5L853.7,450.6L853.7,452.6L852.5,452.5ZM853.7,450.6L855.0,449.5L855.0,451.5L853.7,452.6ZM854.0,450.5L855.4,448.4L857.4,448.4L856.0,450.5ZM855.4,448.4L856.7,445.3L858.7,445.3L857.4,448.4ZM856.7,445.3L858.0,440.9L860.0,440.9L858.7,445.3ZM858.0,440.9L859.1,434.9L861.1,434.9L860.0,440.9ZM859.1,434.9L860.1,427.7L862.1,427.7L861.1,434.9ZM860.1,427.7L861.1,420.7L863.1,420.7L862.1,427.7ZM861.1,420.7L862.0,413.9L864.0,413.9L863.1,420.7ZM862.0,413.9L862.9,407.4L864.9,407.4L864.0,413.9ZM862.9,407.4L863.7,402.5L865.7,402.5L864.9,407.4ZM863.7,402.5L864.5,400.1L866.5,400.1L865.7,402.5ZM864.5,400.1L865.2,399.3L867.2,399.3L866.5,400.1ZM866.2,398.3L866.7,397.9L866.7,399.9L866.2,400.3Z" fill="#808000" stroke="none" shape-rendering="crispEdges"/>
<text class="ax" x="92.8" y="177" text-anchor="end">10.00</text>
<text class="ax" x="92.8" y="282" text-anchor="end">0.00</text>
<text class="ax" x="40.5" y="387" textLength="52.3" lengthAdjust="spacingAndGlyphs">-10.00</text>
<text class="ax" x="40.5" y="492" textLength="52.3" lengthAdjust="spacingAndGlyphs">-20.00</text>
<text class="ax" x="40.5" y="597" textLength="52.3" lengthAdjust="spacingAndGlyphs">-30.00</text>
<text class="ax" x="67.6" y="134" textLength="23.4" lengthAdjust="spacingAndGlyphs">dB</text>
<text class="ax" x="81.3" y="710.8" textLength="59" lengthAdjust="spacingAndGlyphs">500 Hz</text>
<text class="ax" x="252.9" y="710.8" text-anchor="middle">1000</text>
<text class="ax" x="394.6" y="710.8" text-anchor="middle">2000</text>
<text class="ax" x="582.4" y="710.8" text-anchor="middle">5000</text>
<text class="ax" x="725.7" y="710.8" text-anchor="middle">10000</text>
<text class="ax" x="841.3" y="710.8" textLength="51.4" lengthAdjust="spacingAndGlyphs">20000</text>
<text class="ax" x="916.3" y="693.8" textLength="23.6" lengthAdjust="spacingAndGlyphs">Hz</text>
<text x="357" y="135.8" style="font-size:16px;font-weight:bold" textLength="112.8" lengthAdjust="spacingAndGlyphs">VERTIKAL (EQ)</text>
<text class="ax" x="15" y="745.8">LspCAD 6</text>
<rect x="258.5" y="461.5" width="173" height="133" rx="4.5" fill="#ffffff" stroke="#000" stroke-width="1"/>
<rect x="260.5" y="467.5" width="15" height="120" fill="none" stroke="#000" stroke-width="1" stroke-dasharray="1,1" shape-rendering="crispEdges"/>
<rect x="261.5" y="476.5" width="12" height="12" fill="#fff" stroke="#000" stroke-width="1" shape-rendering="crispEdges"/>
<line x1="277" y1="482.0" x2="326" y2="482.0" stroke="#000000" stroke-width="2" shape-rendering="crispEdges"/>
<text class="lg" x="335.5" y="488.0">0, mag</text>
<rect x="261.5" y="497.5" width="12" height="12" fill="#fff" stroke="#000" stroke-width="1" shape-rendering="crispEdges"/>
<line x1="277" y1="503.0" x2="326" y2="503.0" stroke="#808080" stroke-width="2" shape-rendering="crispEdges"/>
<text class="lg" x="335.5" y="509.0">V15, mag</text>
<rect x="261.5" y="518.5" width="12" height="12" fill="#fff" stroke="#000" stroke-width="1" shape-rendering="crispEdges"/>
<line x1="277" y1="524.0" x2="326" y2="524.0" stroke="#808000" stroke-width="2" shape-rendering="crispEdges"/>
<text class="lg" x="335.5" y="530.5">V30, mag</text>
<rect x="261.5" y="540.5" width="12" height="12" fill="#fff" stroke="#000" stroke-width="1" shape-rendering="crispEdges"/>
<line x1="277" y1="546.0" x2="326" y2="546.0" stroke="#808000" stroke-width="2" shape-rendering="crispEdges"/>
<text class="lg" x="335.5" y="552.0">V45, mag</text>
<rect x="261.5" y="561.5" width="12" height="12" fill="#fff" stroke="#000" stroke-width="1" shape-rendering="crispEdges"/>
<line x1="277" y1="567.0" x2="326" y2="567.0" stroke="#808000" stroke-width="2" shape-rendering="crispEdges"/>
<text class="lg" x="335.5" y="573.0">V60, mag</text>
<g shape-rendering="crispEdges">
<rect x="1" y="770" width="984" height="1" fill="#ffffff"/>
<rect x="1" y="775" width="983" height="1" fill="#a0a0a0"/>
<rect x="1" y="775" width="1" height="16" fill="#a0a0a0"/>
<rect x="984" y="771" width="1" height="21" fill="#ffffff"/>
<rect x="1" y="791" width="984" height="1" fill="#ffffff"/>
<rect x="150" y="776" width="1" height="15" fill="#ffffff"/><rect x="153" y="776" width="1" height="15" fill="#a0a0a0"/>
</g>
<path d="M973.5,791 L984,780.5 M977.5,791 L984,784.5 M981.5,791 L984,788.5" stroke="#a0a0a0" stroke-width="1.6" fill="none"/>
</svg>
</body></html>
